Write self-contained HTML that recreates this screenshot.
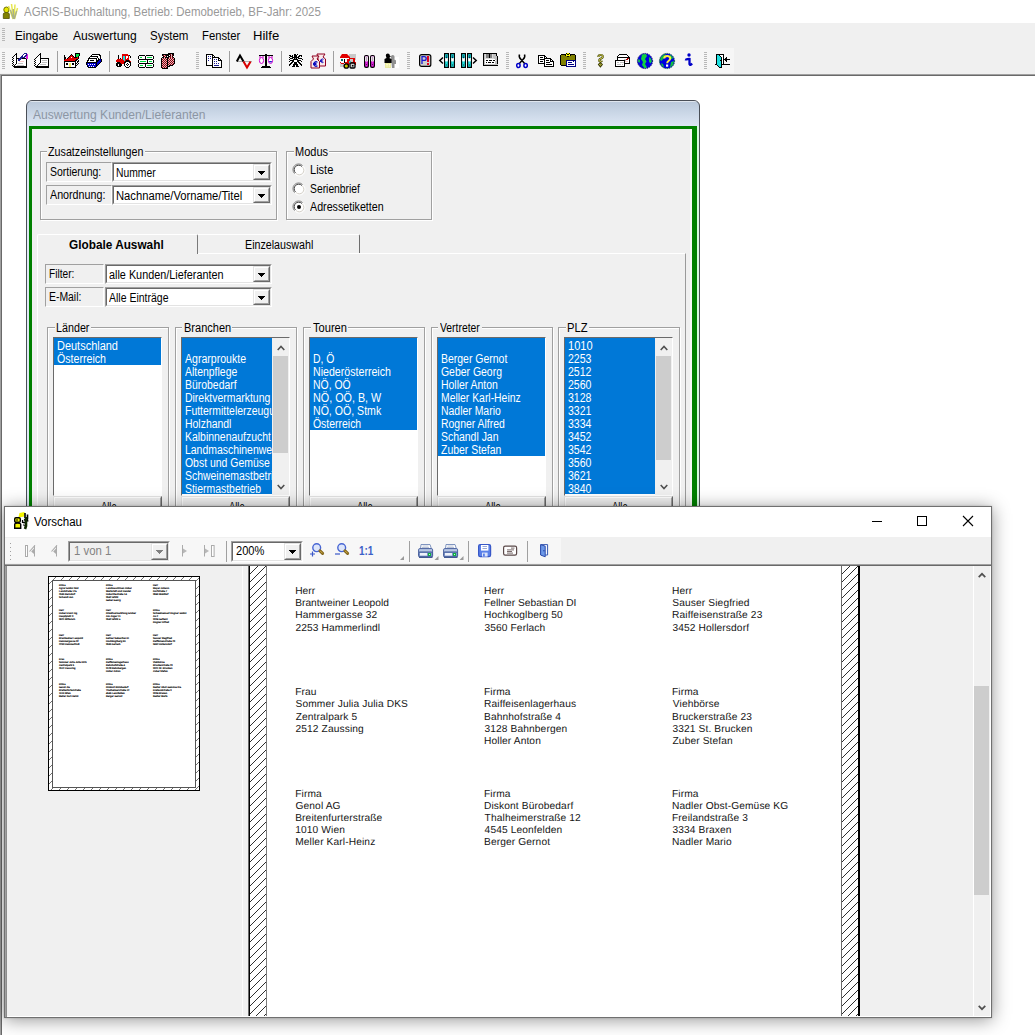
<!DOCTYPE html>
<html><head><meta charset="utf-8"><title>AGRIS</title><style>
*{box-sizing:border-box;margin:0;padding:0}
html,body{width:1035px;height:1035px;overflow:hidden;background:#fff}
body{position:relative;font-family:"Liberation Sans",sans-serif;font-size:12px;color:#000}
.a{position:absolute}
.t{position:absolute;white-space:pre;transform-origin:0 0;display:block}
svg{position:absolute;overflow:visible}
.gb{position:absolute;border:1px solid #a0a0a0;box-shadow:1px 1px 0 #fff, inset 1px 1px 0 #fff}
.lbl{position:absolute;background:#f0f0f0;border:1px solid;border-color:#a0a0a0 #fff #fff #a0a0a0}
.sunk{position:absolute;background:#fff;border:1px solid;border-color:#a0a0a0 #fff #fff #a0a0a0}
.sunk:before{content:"";position:absolute;left:0;top:0;right:0;bottom:0;border:1px solid;border-color:#696969 #e3e3e3 #e3e3e3 #696969}
.btn{position:absolute;background:#f0f0f0;border:1px solid;border-color:#e3e3e3 #696969 #696969 #e3e3e3}
.btn:before{content:"";position:absolute;left:0;top:0;right:0;bottom:0;border:1px solid;border-color:#fff #a0a0a0 #a0a0a0 #fff}
.sel{position:absolute;background:#0078d7}
.grip{position:absolute;width:3px;background:repeating-linear-gradient(to bottom,#b8b8b8 0,#b8b8b8 1px,transparent 1px,transparent 2px)}
.sep{position:absolute;width:1px;background:#a0a0a0}
</style></head><body>
<div class="a" style="left:0px;top:0px;width:1035px;height:23px;background:#fff"></div>
<div class="a" style="left:0px;top:23px;width:1035px;height:51px;background:#f0f0f0"></div>
<div class="a" style="left:0px;top:48px;width:734px;height:25px;background:#f6f6f6"></div>
<div class="a" style="left:0px;top:74px;width:1035px;height:1px;background:#a0a0a0"></div>
<div class="a" style="left:0px;top:75px;width:1035px;height:1px;background:#696969"></div>
<div class="a" style="left:0px;top:74px;width:1px;height:961px;background:#a0a0a0"></div>
<div class="a" style="left:1px;top:75px;width:1px;height:960px;background:#696969"></div>
<span class="t" style="left:23.90px;top:6.00px;font-size:12px;line-height:12px;color:#999;transform:scaleX(0.9551);">AGRIS-Buchhaltung, Betrieb: Demobetrieb, BF-Jahr: 2025</span>
<span class="t" style="left:15.47px;top:30.00px;font-size:12px;line-height:12px;color:#000;transform:scaleX(0.9777);">Eingabe</span>
<span class="t" style="left:72.60px;top:30.00px;font-size:12px;line-height:12px;color:#000;transform:scaleX(1.0064);">Auswertung</span>
<span class="t" style="left:149.92px;top:30.00px;font-size:12px;line-height:12px;color:#000;transform:scaleX(0.9600);">System</span>
<span class="t" style="left:201.51px;top:30.00px;font-size:12px;line-height:12px;color:#000;transform:scaleX(0.9406);">Fenster</span>
<span class="t" style="left:253.36px;top:30.00px;font-size:12px;line-height:12px;color:#000;transform:scaleX(1.0909);">Hilfe</span>
<div class="grip" style="left:2px;top:52px;height:18px"></div>
<div class="grip" style="left:196px;top:52px;height:18px"></div>
<div class="grip" style="left:407px;top:52px;height:18px"></div>
<div class="grip" style="left:506px;top:52px;height:18px"></div>
<div class="grip" style="left:583px;top:52px;height:18px"></div>
<div class="grip" style="left:704px;top:52px;height:18px"></div>
<div class="grip" style="left:2px;top:28px;width:3px;height:14px;"></div>
<div class="sep" style="left:57px;top:51px;height:21px"></div>
<div class="sep" style="left:109px;top:51px;height:21px"></div>
<div class="sep" style="left:229px;top:51px;height:21px"></div>
<div class="sep" style="left:281px;top:51px;height:21px"></div>
<div class="sep" style="left:333px;top:51px;height:21px"></div>
<svg style="left:0;top:0" width="760" height="80"><g transform="translate(12,53)" shape-rendering="crispEdges"><rect x="4" y="0" width="1" height="1" fill="#000"/><rect x="12" y="0" width="3" height="1" fill="#1c1c90"/><rect x="3" y="1" width="2" height="1" fill="#000"/><rect x="11" y="1" width="1" height="1" fill="#1c1c90"/><rect x="12" y="1" width="2" height="1" fill="#fff"/><rect x="14" y="1" width="1" height="1" fill="#1c1c90"/><rect x="15" y="1" width="1" height="1" fill="#e020e0"/><rect x="2" y="2" width="1" height="1" fill="#000"/><rect x="3" y="2" width="1" height="1" fill="#fff"/><rect x="4" y="2" width="1" height="1" fill="#000"/><rect x="10" y="2" width="1" height="1" fill="#1c1c90"/><rect x="11" y="2" width="2" height="1" fill="#fff"/><rect x="13" y="2" width="2" height="1" fill="#1c1c90"/><rect x="15" y="2" width="1" height="1" fill="#e020e0"/><rect x="1" y="3" width="1" height="1" fill="#000"/><rect x="3" y="3" width="1" height="1" fill="#fff"/><rect x="4" y="3" width="1" height="1" fill="#000"/><rect x="9" y="3" width="2" height="1" fill="#1c1c90"/><rect x="11" y="3" width="1" height="1" fill="#fff"/><rect x="12" y="3" width="2" height="1" fill="#1c1c90"/><rect x="14" y="3" width="2" height="1" fill="#e020e0"/><rect x="0" y="4" width="1" height="1" fill="#000"/><rect x="2" y="4" width="2" height="1" fill="#fff"/><rect x="4" y="4" width="1" height="1" fill="#000"/><rect x="8" y="4" width="5" height="1" fill="#1c1c90"/><rect x="14" y="4" width="2" height="1" fill="#e020e0"/><rect x="1" y="5" width="1" height="1" fill="#000"/><rect x="2" y="5" width="2" height="1" fill="#fff"/><rect x="4" y="5" width="3" height="1" fill="#000"/><rect x="7" y="5" width="3" height="1" fill="#1c1c90"/><rect x="10" y="5" width="4" height="1" fill="#000"/><rect x="14" y="5" width="2" height="1" fill="#e020e0"/><rect x="0" y="6" width="1" height="1" fill="#000"/><rect x="2" y="6" width="2" height="1" fill="#fff"/><rect x="4" y="6" width="1" height="1" fill="#000"/><rect x="5" y="6" width="1" height="1" fill="#fff"/><rect x="6" y="6" width="3" height="1" fill="#1c1c90"/><rect x="9" y="6" width="5" height="1" fill="#fff"/><rect x="14" y="6" width="1" height="1" fill="#000"/><rect x="1" y="7" width="1" height="1" fill="#000"/><rect x="2" y="7" width="2" height="1" fill="#fff"/><rect x="4" y="7" width="1" height="1" fill="#000"/><rect x="5" y="7" width="1" height="1" fill="#fff"/><rect x="6" y="7" width="2" height="1" fill="#1c1c90"/><rect x="8" y="7" width="6" height="1" fill="#fff"/><rect x="14" y="7" width="1" height="1" fill="#000"/><rect x="0" y="8" width="1" height="1" fill="#000"/><rect x="2" y="8" width="2" height="1" fill="#fff"/><rect x="4" y="8" width="1" height="1" fill="#000"/><rect x="5" y="8" width="2" height="1" fill="#fff"/><rect x="7" y="8" width="5" height="1" fill="#f6c8c8"/><rect x="12" y="8" width="2" height="1" fill="#fff"/><rect x="14" y="8" width="1" height="1" fill="#000"/><rect x="1" y="9" width="1" height="1" fill="#000"/><rect x="2" y="9" width="2" height="1" fill="#fff"/><rect x="4" y="9" width="1" height="1" fill="#000"/><rect x="5" y="9" width="9" height="1" fill="#fff"/><rect x="14" y="9" width="1" height="1" fill="#000"/><rect x="0" y="10" width="1" height="1" fill="#000"/><rect x="2" y="10" width="2" height="1" fill="#fff"/><rect x="4" y="10" width="1" height="1" fill="#000"/><rect x="5" y="10" width="1" height="1" fill="#fff"/><rect x="6" y="10" width="5" height="1" fill="#c0c0c0"/><rect x="11" y="10" width="3" height="1" fill="#fff"/><rect x="14" y="10" width="1" height="1" fill="#000"/><rect x="1" y="11" width="1" height="1" fill="#000"/><rect x="2" y="11" width="1" height="1" fill="#fff"/><rect x="3" y="11" width="1" height="1" fill="#000"/><rect x="4" y="11" width="10" height="1" fill="#fff"/><rect x="14" y="11" width="1" height="1" fill="#000"/><rect x="0" y="12" width="1" height="1" fill="#000"/><rect x="2" y="12" width="1" height="1" fill="#000"/><rect x="3" y="12" width="2" height="1" fill="#fff"/><rect x="5" y="12" width="7" height="1" fill="#c0c0c0"/><rect x="12" y="12" width="2" height="1" fill="#fff"/><rect x="14" y="12" width="1" height="1" fill="#000"/><rect x="1" y="13" width="14" height="1" fill="#000"/><rect x="2" y="14" width="13" height="1" fill="#000"/></g><g transform="translate(34,53)" shape-rendering="crispEdges"><rect x="6" y="0" width="1" height="1" fill="#000"/><rect x="5" y="1" width="2" height="1" fill="#000"/><rect x="4" y="2" width="1" height="1" fill="#000"/><rect x="5" y="2" width="1" height="1" fill="#fff"/><rect x="6" y="2" width="1" height="1" fill="#000"/><rect x="3" y="3" width="1" height="1" fill="#000"/><rect x="4" y="3" width="2" height="1" fill="#fff"/><rect x="6" y="3" width="1" height="1" fill="#000"/><rect x="2" y="4" width="1" height="1" fill="#000"/><rect x="3" y="4" width="3" height="1" fill="#fff"/><rect x="6" y="4" width="1" height="1" fill="#000"/><rect x="1" y="5" width="1" height="1" fill="#000"/><rect x="3" y="5" width="3" height="1" fill="#fff"/><rect x="6" y="5" width="9" height="1" fill="#000"/><rect x="0" y="6" width="1" height="1" fill="#000"/><rect x="2" y="6" width="4" height="1" fill="#fff"/><rect x="6" y="6" width="1" height="1" fill="#000"/><rect x="7" y="6" width="7" height="1" fill="#fff"/><rect x="14" y="6" width="1" height="1" fill="#000"/><rect x="1" y="7" width="1" height="1" fill="#000"/><rect x="2" y="7" width="4" height="1" fill="#fff"/><rect x="6" y="7" width="1" height="1" fill="#000"/><rect x="7" y="7" width="1" height="1" fill="#fff"/><rect x="8" y="7" width="5" height="1" fill="#c0c0c0"/><rect x="13" y="7" width="1" height="1" fill="#fff"/><rect x="14" y="7" width="1" height="1" fill="#000"/><rect x="0" y="8" width="1" height="1" fill="#000"/><rect x="2" y="8" width="4" height="1" fill="#fff"/><rect x="6" y="8" width="1" height="1" fill="#000"/><rect x="7" y="8" width="7" height="1" fill="#fff"/><rect x="14" y="8" width="1" height="1" fill="#000"/><rect x="1" y="9" width="1" height="1" fill="#000"/><rect x="2" y="9" width="4" height="1" fill="#fff"/><rect x="6" y="9" width="1" height="1" fill="#000"/><rect x="7" y="9" width="1" height="1" fill="#fff"/><rect x="8" y="9" width="5" height="1" fill="#c0c0c0"/><rect x="13" y="9" width="1" height="1" fill="#fff"/><rect x="14" y="9" width="1" height="1" fill="#000"/><rect x="0" y="10" width="1" height="1" fill="#000"/><rect x="2" y="10" width="3" height="1" fill="#fff"/><rect x="5" y="10" width="1" height="1" fill="#000"/><rect x="6" y="10" width="8" height="1" fill="#fff"/><rect x="14" y="10" width="1" height="1" fill="#000"/><rect x="1" y="11" width="1" height="1" fill="#000"/><rect x="2" y="11" width="2" height="1" fill="#fff"/><rect x="4" y="11" width="1" height="1" fill="#000"/><rect x="5" y="11" width="1" height="1" fill="#fff"/><rect x="6" y="11" width="6" height="1" fill="#c0c0c0"/><rect x="12" y="11" width="2" height="1" fill="#fff"/><rect x="14" y="11" width="1" height="1" fill="#000"/><rect x="0" y="12" width="1" height="1" fill="#000"/><rect x="2" y="12" width="1" height="1" fill="#fff"/><rect x="3" y="12" width="1" height="1" fill="#000"/><rect x="4" y="12" width="10" height="1" fill="#fff"/><rect x="14" y="12" width="1" height="1" fill="#000"/><rect x="1" y="13" width="14" height="1" fill="#000"/><rect x="2" y="14" width="13" height="1" fill="#000"/></g><g transform="translate(64,53)" shape-rendering="crispEdges"><rect x="11" y="0" width="5" height="1" fill="#000"/><rect x="7" y="1" width="1" height="1" fill="#000"/><rect x="11" y="1" width="1" height="1" fill="#000"/><rect x="12" y="1" width="3" height="1" fill="#00e040"/><rect x="15" y="1" width="1" height="1" fill="#000"/><rect x="0" y="2" width="1" height="1" fill="#000"/><rect x="6" y="2" width="1" height="1" fill="#000"/><rect x="7" y="2" width="1" height="1" fill="#e00000"/><rect x="8" y="2" width="1" height="1" fill="#000"/><rect x="11" y="2" width="1" height="1" fill="#000"/><rect x="12" y="2" width="3" height="1" fill="#00e040"/><rect x="15" y="2" width="1" height="1" fill="#000"/><rect x="0" y="3" width="1" height="1" fill="#000"/><rect x="5" y="3" width="1" height="1" fill="#000"/><rect x="6" y="3" width="3" height="1" fill="#e00000"/><rect x="9" y="3" width="1" height="1" fill="#000"/><rect x="11" y="3" width="1" height="1" fill="#000"/><rect x="12" y="3" width="2" height="1" fill="#00e040"/><rect x="14" y="3" width="1" height="1" fill="#000"/><rect x="0" y="4" width="2" height="1" fill="#000"/><rect x="4" y="4" width="1" height="1" fill="#000"/><rect x="5" y="4" width="2" height="1" fill="#e00000"/><rect x="7" y="4" width="1" height="1" fill="#fff"/><rect x="8" y="4" width="2" height="1" fill="#e00000"/><rect x="10" y="4" width="3" height="1" fill="#000"/><rect x="13" y="4" width="1" height="1" fill="#e00000"/><rect x="14" y="4" width="1" height="1" fill="#000"/><rect x="0" y="5" width="2" height="1" fill="#000"/><rect x="3" y="5" width="1" height="1" fill="#000"/><rect x="4" y="5" width="10" height="1" fill="#e00000"/><rect x="14" y="5" width="1" height="1" fill="#000"/><rect x="0" y="6" width="1" height="1" fill="#000"/><rect x="1" y="6" width="11" height="1" fill="#e00000"/><rect x="12" y="6" width="2" height="1" fill="#000"/><rect x="0" y="7" width="11" height="1" fill="#e00000"/><rect x="11" y="7" width="2" height="1" fill="#000"/><rect x="13" y="7" width="1" height="1" fill="#fff"/><rect x="14" y="7" width="1" height="1" fill="#000"/><rect x="0" y="8" width="12" height="1" fill="#000"/><rect x="12" y="8" width="1" height="1" fill="#fff"/><rect x="13" y="8" width="2" height="1" fill="#000"/><rect x="0" y="9" width="1" height="1" fill="#000"/><rect x="1" y="9" width="10" height="1" fill="#fff"/><rect x="11" y="9" width="1" height="1" fill="#000"/><rect x="12" y="9" width="1" height="1" fill="#fff"/><rect x="13" y="9" width="1" height="1" fill="#000"/><rect x="0" y="10" width="1" height="1" fill="#000"/><rect x="1" y="10" width="1" height="1" fill="#fff"/><rect x="2" y="10" width="2" height="1" fill="#000"/><rect x="4" y="10" width="1" height="1" fill="#fff"/><rect x="5" y="10" width="2" height="1" fill="#f0f060"/><rect x="7" y="10" width="1" height="1" fill="#fff"/><rect x="8" y="10" width="2" height="1" fill="#000"/><rect x="10" y="10" width="1" height="1" fill="#fff"/><rect x="11" y="10" width="2" height="1" fill="#000"/><rect x="13" y="10" width="1" height="1" fill="#fff"/><rect x="14" y="10" width="1" height="1" fill="#000"/><rect x="0" y="11" width="1" height="1" fill="#000"/><rect x="1" y="11" width="1" height="1" fill="#fff"/><rect x="2" y="11" width="2" height="1" fill="#000"/><rect x="4" y="11" width="1" height="1" fill="#fff"/><rect x="5" y="11" width="2" height="1" fill="#f0f060"/><rect x="7" y="11" width="1" height="1" fill="#fff"/><rect x="8" y="11" width="2" height="1" fill="#000"/><rect x="10" y="11" width="1" height="1" fill="#fff"/><rect x="11" y="11" width="1" height="1" fill="#000"/><rect x="12" y="11" width="1" height="1" fill="#fff"/><rect x="13" y="11" width="1" height="1" fill="#000"/><rect x="0" y="12" width="1" height="1" fill="#000"/><rect x="1" y="12" width="4" height="1" fill="#fff"/><rect x="5" y="12" width="2" height="1" fill="#f0f060"/><rect x="7" y="12" width="4" height="1" fill="#fff"/><rect x="11" y="12" width="2" height="1" fill="#000"/><rect x="0" y="13" width="1" height="1" fill="#000"/><rect x="1" y="13" width="4" height="1" fill="#fff"/><rect x="5" y="13" width="2" height="1" fill="#f0f060"/><rect x="7" y="13" width="4" height="1" fill="#fff"/><rect x="11" y="13" width="1" height="1" fill="#000"/><rect x="0" y="14" width="12" height="1" fill="#000"/></g><g transform="translate(86,54)" shape-rendering="crispEdges"><rect x="6" y="0" width="8" height="1" fill="#000"/><rect x="5" y="1" width="1" height="1" fill="#000"/><rect x="6" y="1" width="7" height="1" fill="#fff"/><rect x="13" y="1" width="2" height="1" fill="#000"/><rect x="4" y="2" width="8" height="1" fill="#000"/><rect x="12" y="2" width="2" height="1" fill="#fff"/><rect x="14" y="2" width="1" height="1" fill="#000"/><rect x="3" y="3" width="1" height="1" fill="#000"/><rect x="4" y="3" width="7" height="1" fill="#fff"/><rect x="11" y="3" width="1" height="1" fill="#000"/><rect x="12" y="3" width="2" height="1" fill="#fff"/><rect x="14" y="3" width="1" height="1" fill="#000"/><rect x="2" y="4" width="9" height="1" fill="#000"/><rect x="11" y="4" width="1" height="1" fill="#fff"/><rect x="12" y="4" width="1" height="1" fill="#000"/><rect x="13" y="4" width="1" height="1" fill="#fff"/><rect x="14" y="4" width="1" height="1" fill="#000"/><rect x="2" y="5" width="1" height="1" fill="#000"/><rect x="3" y="5" width="7" height="1" fill="#fff"/><rect x="10" y="5" width="1" height="1" fill="#000"/><rect x="11" y="5" width="1" height="1" fill="#fff"/><rect x="12" y="5" width="2" height="1" fill="#000"/><rect x="14" y="5" width="1" height="1" fill="#0000c8"/><rect x="15" y="5" width="1" height="1" fill="#000"/><rect x="1" y="6" width="2" height="1" fill="#000"/><rect x="3" y="6" width="1" height="1" fill="#fff"/><rect x="4" y="6" width="4" height="1" fill="#000"/><rect x="8" y="6" width="2" height="1" fill="#fff"/><rect x="10" y="6" width="3" height="1" fill="#000"/><rect x="13" y="6" width="2" height="1" fill="#0000c8"/><rect x="15" y="6" width="1" height="1" fill="#000"/><rect x="1" y="7" width="1" height="1" fill="#000"/><rect x="2" y="7" width="8" height="1" fill="#fff"/><rect x="10" y="7" width="2" height="1" fill="#000"/><rect x="12" y="7" width="3" height="1" fill="#0000c8"/><rect x="15" y="7" width="1" height="1" fill="#000"/><rect x="0" y="8" width="11" height="1" fill="#000"/><rect x="11" y="8" width="3" height="1" fill="#0000c8"/><rect x="14" y="8" width="1" height="1" fill="#000"/><rect x="0" y="9" width="1" height="1" fill="#000"/><rect x="1" y="9" width="9" height="1" fill="#0000c8"/><rect x="10" y="9" width="1" height="1" fill="#000"/><rect x="11" y="9" width="2" height="1" fill="#0000c8"/><rect x="13" y="9" width="1" height="1" fill="#000"/><rect x="0" y="10" width="1" height="1" fill="#000"/><rect x="1" y="10" width="1" height="1" fill="#0000c8"/><rect x="2" y="10" width="1" height="1" fill="#fff"/><rect x="3" y="10" width="1" height="1" fill="#0000c8"/><rect x="4" y="10" width="1" height="1" fill="#fff"/><rect x="5" y="10" width="1" height="1" fill="#0000c8"/><rect x="6" y="10" width="1" height="1" fill="#fff"/><rect x="7" y="10" width="1" height="1" fill="#0000c8"/><rect x="8" y="10" width="1" height="1" fill="#fff"/><rect x="9" y="10" width="1" height="1" fill="#0000c8"/><rect x="10" y="10" width="1" height="1" fill="#000"/><rect x="11" y="10" width="1" height="1" fill="#0000c8"/><rect x="12" y="10" width="1" height="1" fill="#000"/><rect x="1" y="11" width="1" height="1" fill="#000"/><rect x="2" y="11" width="8" height="1" fill="#0000c8"/><rect x="10" y="11" width="2" height="1" fill="#000"/><rect x="1" y="12" width="1" height="1" fill="#000"/><rect x="2" y="12" width="1" height="1" fill="#0000c8"/><rect x="3" y="12" width="1" height="1" fill="#fff"/><rect x="4" y="12" width="1" height="1" fill="#0000c8"/><rect x="5" y="12" width="1" height="1" fill="#fff"/><rect x="6" y="12" width="1" height="1" fill="#0000c8"/><rect x="7" y="12" width="1" height="1" fill="#fff"/><rect x="8" y="12" width="2" height="1" fill="#0000c8"/><rect x="10" y="12" width="1" height="1" fill="#000"/><rect x="2" y="13" width="8" height="1" fill="#000"/></g><g transform="translate(116,54)" shape-rendering="crispEdges"><rect x="6" y="0" width="6" height="1" fill="#e00000"/><rect x="2" y="1" width="1" height="1" fill="#000"/><rect x="6" y="1" width="7" height="1" fill="#e00000"/><rect x="13" y="1" width="1" height="1" fill="#000"/><rect x="2" y="2" width="1" height="1" fill="#000"/><rect x="6" y="2" width="1" height="1" fill="#e00000"/><rect x="7" y="2" width="2" height="1" fill="#20e0e0"/><rect x="9" y="2" width="1" height="1" fill="#e00000"/><rect x="10" y="2" width="2" height="1" fill="#fff"/><rect x="12" y="2" width="1" height="1" fill="#e00000"/><rect x="14" y="2" width="1" height="1" fill="#000"/><rect x="2" y="3" width="1" height="1" fill="#000"/><rect x="6" y="3" width="1" height="1" fill="#e00000"/><rect x="7" y="3" width="2" height="1" fill="#20e0e0"/><rect x="9" y="3" width="1" height="1" fill="#e00000"/><rect x="10" y="3" width="2" height="1" fill="#fff"/><rect x="12" y="3" width="1" height="1" fill="#e00000"/><rect x="14" y="3" width="1" height="1" fill="#000"/><rect x="2" y="4" width="1" height="1" fill="#000"/><rect x="4" y="4" width="1" height="1" fill="#000"/><rect x="6" y="4" width="1" height="1" fill="#e00000"/><rect x="7" y="4" width="2" height="1" fill="#20e0e0"/><rect x="9" y="4" width="1" height="1" fill="#e00000"/><rect x="10" y="4" width="1" height="1" fill="#fff"/><rect x="11" y="4" width="2" height="1" fill="#e00000"/><rect x="1" y="5" width="6" height="1" fill="#e00000"/><rect x="7" y="5" width="2" height="1" fill="#20e0e0"/><rect x="9" y="5" width="4" height="1" fill="#e00000"/><rect x="0" y="6" width="8" height="1" fill="#e00000"/><rect x="8" y="6" width="1" height="1" fill="#20e0e0"/><rect x="9" y="6" width="1" height="1" fill="#e00000"/><rect x="10" y="6" width="3" height="1" fill="#000"/><rect x="13" y="6" width="1" height="1" fill="#e00000"/><rect x="0" y="7" width="9" height="1" fill="#e00000"/><rect x="9" y="7" width="5" height="1" fill="#000"/><rect x="14" y="7" width="1" height="1" fill="#e00000"/><rect x="1" y="8" width="3" height="1" fill="#000"/><rect x="4" y="8" width="4" height="1" fill="#e00000"/><rect x="8" y="8" width="2" height="1" fill="#000"/><rect x="10" y="8" width="3" height="1" fill="#fff"/><rect x="13" y="8" width="2" height="1" fill="#000"/><rect x="0" y="9" width="5" height="1" fill="#000"/><rect x="5" y="9" width="3" height="1" fill="#e00000"/><rect x="8" y="9" width="1" height="1" fill="#000"/><rect x="9" y="9" width="2" height="1" fill="#fff"/><rect x="11" y="9" width="1" height="1" fill="#000"/><rect x="12" y="9" width="2" height="1" fill="#fff"/><rect x="14" y="9" width="1" height="1" fill="#000"/><rect x="0" y="10" width="2" height="1" fill="#000"/><rect x="2" y="10" width="1" height="1" fill="#fff"/><rect x="3" y="10" width="3" height="1" fill="#000"/><rect x="8" y="10" width="1" height="1" fill="#000"/><rect x="9" y="10" width="1" height="1" fill="#fff"/><rect x="10" y="10" width="1" height="1" fill="#000"/><rect x="11" y="10" width="1" height="1" fill="#fff"/><rect x="12" y="10" width="1" height="1" fill="#000"/><rect x="13" y="10" width="1" height="1" fill="#fff"/><rect x="14" y="10" width="1" height="1" fill="#000"/><rect x="0" y="11" width="2" height="1" fill="#000"/><rect x="2" y="11" width="1" height="1" fill="#fff"/><rect x="3" y="11" width="3" height="1" fill="#000"/><rect x="8" y="11" width="1" height="1" fill="#000"/><rect x="9" y="11" width="2" height="1" fill="#fff"/><rect x="11" y="11" width="1" height="1" fill="#000"/><rect x="12" y="11" width="2" height="1" fill="#fff"/><rect x="14" y="11" width="1" height="1" fill="#000"/><rect x="1" y="12" width="4" height="1" fill="#000"/><rect x="9" y="12" width="1" height="1" fill="#000"/><rect x="10" y="12" width="3" height="1" fill="#fff"/><rect x="13" y="12" width="1" height="1" fill="#000"/><rect x="10" y="13" width="3" height="1" fill="#000"/></g><g transform="translate(138,55)" shape-rendering="crispEdges"><rect x="1" y="0" width="6" height="1" fill="#000"/><rect x="8" y="0" width="7" height="1" fill="#000"/><rect x="0" y="1" width="1" height="1" fill="#000"/><rect x="1" y="1" width="6" height="1" fill="#fff"/><rect x="7" y="1" width="1" height="1" fill="#000"/><rect x="8" y="1" width="7" height="1" fill="#fff"/><rect x="15" y="1" width="1" height="1" fill="#000"/><rect x="0" y="2" width="1" height="1" fill="#000"/><rect x="1" y="2" width="1" height="1" fill="#fff"/><rect x="2" y="2" width="2" height="1" fill="#00e040"/><rect x="4" y="2" width="3" height="1" fill="#fff"/><rect x="7" y="2" width="1" height="1" fill="#000"/><rect x="8" y="2" width="1" height="1" fill="#fff"/><rect x="9" y="2" width="5" height="1" fill="#00e040"/><rect x="14" y="2" width="1" height="1" fill="#fff"/><rect x="15" y="2" width="1" height="1" fill="#000"/><rect x="0" y="3" width="1" height="1" fill="#000"/><rect x="1" y="3" width="6" height="1" fill="#fff"/><rect x="7" y="3" width="1" height="1" fill="#000"/><rect x="8" y="3" width="7" height="1" fill="#fff"/><rect x="15" y="3" width="1" height="1" fill="#000"/><rect x="1" y="4" width="14" height="1" fill="#000"/><rect x="0" y="5" width="1" height="1" fill="#000"/><rect x="1" y="5" width="8" height="1" fill="#fff"/><rect x="9" y="5" width="1" height="1" fill="#000"/><rect x="10" y="5" width="5" height="1" fill="#fff"/><rect x="15" y="5" width="1" height="1" fill="#000"/><rect x="0" y="6" width="1" height="1" fill="#000"/><rect x="1" y="6" width="1" height="1" fill="#fff"/><rect x="2" y="6" width="6" height="1" fill="#00e040"/><rect x="8" y="6" width="1" height="1" fill="#fff"/><rect x="9" y="6" width="1" height="1" fill="#000"/><rect x="10" y="6" width="1" height="1" fill="#fff"/><rect x="11" y="6" width="3" height="1" fill="#00e040"/><rect x="14" y="6" width="1" height="1" fill="#fff"/><rect x="15" y="6" width="1" height="1" fill="#000"/><rect x="0" y="7" width="1" height="1" fill="#000"/><rect x="1" y="7" width="8" height="1" fill="#fff"/><rect x="9" y="7" width="1" height="1" fill="#000"/><rect x="10" y="7" width="5" height="1" fill="#fff"/><rect x="15" y="7" width="1" height="1" fill="#000"/><rect x="1" y="8" width="14" height="1" fill="#000"/><rect x="0" y="9" width="1" height="1" fill="#000"/><rect x="1" y="9" width="6" height="1" fill="#fff"/><rect x="7" y="9" width="1" height="1" fill="#000"/><rect x="8" y="9" width="7" height="1" fill="#fff"/><rect x="15" y="9" width="1" height="1" fill="#000"/><rect x="0" y="10" width="1" height="1" fill="#000"/><rect x="1" y="10" width="1" height="1" fill="#fff"/><rect x="2" y="10" width="3" height="1" fill="#00e040"/><rect x="5" y="10" width="2" height="1" fill="#fff"/><rect x="7" y="10" width="1" height="1" fill="#000"/><rect x="8" y="10" width="1" height="1" fill="#fff"/><rect x="9" y="10" width="5" height="1" fill="#00e040"/><rect x="14" y="10" width="1" height="1" fill="#fff"/><rect x="15" y="10" width="1" height="1" fill="#000"/><rect x="0" y="11" width="1" height="1" fill="#000"/><rect x="1" y="11" width="6" height="1" fill="#fff"/><rect x="7" y="11" width="1" height="1" fill="#000"/><rect x="8" y="11" width="7" height="1" fill="#fff"/><rect x="15" y="11" width="1" height="1" fill="#000"/><rect x="1" y="12" width="6" height="1" fill="#000"/><rect x="8" y="12" width="7" height="1" fill="#000"/></g><g transform="translate(160,53)" shape-rendering="crispEdges"><rect x="8" y="0" width="6" height="1" fill="#000"/><rect x="2" y="1" width="8" height="1" fill="#000"/><rect x="10" y="1" width="1" height="1" fill="#8c0010"/><rect x="11" y="1" width="1" height="1" fill="#e8b8b8"/><rect x="12" y="1" width="2" height="1" fill="#000"/><rect x="2" y="2" width="1" height="1" fill="#000"/><rect x="3" y="2" width="1" height="1" fill="#8c0010"/><rect x="4" y="2" width="1" height="1" fill="#e8b8b8"/><rect x="5" y="2" width="1" height="1" fill="#8c0010"/><rect x="6" y="2" width="3" height="1" fill="#000"/><rect x="9" y="2" width="1" height="1" fill="#fff"/><rect x="10" y="2" width="1" height="1" fill="#000"/><rect x="11" y="2" width="1" height="1" fill="#e8b8b8"/><rect x="12" y="2" width="1" height="1" fill="#8c0010"/><rect x="13" y="2" width="1" height="1" fill="#000"/><rect x="3" y="3" width="1" height="1" fill="#000"/><rect x="4" y="3" width="1" height="1" fill="#8c0010"/><rect x="5" y="3" width="1" height="1" fill="#e8b8b8"/><rect x="6" y="3" width="1" height="1" fill="#000"/><rect x="7" y="3" width="1" height="1" fill="#fff"/><rect x="8" y="3" width="2" height="1" fill="#000"/><rect x="10" y="3" width="1" height="1" fill="#8c0010"/><rect x="11" y="3" width="1" height="1" fill="#e8b8b8"/><rect x="12" y="3" width="1" height="1" fill="#000"/><rect x="2" y="4" width="2" height="1" fill="#000"/><rect x="4" y="4" width="1" height="1" fill="#e8b8b8"/><rect x="5" y="4" width="4" height="1" fill="#000"/><rect x="9" y="4" width="1" height="1" fill="#e8b8b8"/><rect x="10" y="4" width="1" height="1" fill="#8c0010"/><rect x="11" y="4" width="1" height="1" fill="#e8b8b8"/><rect x="12" y="4" width="1" height="1" fill="#8c0010"/><rect x="13" y="4" width="1" height="1" fill="#000"/><rect x="1" y="5" width="1" height="1" fill="#000"/><rect x="2" y="5" width="1" height="1" fill="#e8b8b8"/><rect x="3" y="5" width="1" height="1" fill="#8c0010"/><rect x="4" y="5" width="1" height="1" fill="#e8b8b8"/><rect x="5" y="5" width="1" height="1" fill="#8c0010"/><rect x="6" y="5" width="1" height="1" fill="#e8b8b8"/><rect x="7" y="5" width="1" height="1" fill="#000"/><rect x="8" y="5" width="1" height="1" fill="#8c0010"/><rect x="9" y="5" width="1" height="1" fill="#e8b8b8"/><rect x="10" y="5" width="1" height="1" fill="#8c0010"/><rect x="11" y="5" width="1" height="1" fill="#e8b8b8"/><rect x="12" y="5" width="1" height="1" fill="#8c0010"/><rect x="13" y="5" width="1" height="1" fill="#e8b8b8"/><rect x="14" y="5" width="1" height="1" fill="#000"/><rect x="1" y="6" width="1" height="1" fill="#000"/><rect x="2" y="6" width="1" height="1" fill="#8c0010"/><rect x="3" y="6" width="1" height="1" fill="#e8b8b8"/><rect x="4" y="6" width="1" height="1" fill="#8c0010"/><rect x="5" y="6" width="1" height="1" fill="#e8b8b8"/><rect x="6" y="6" width="1" height="1" fill="#8c0010"/><rect x="7" y="6" width="1" height="1" fill="#000"/><rect x="8" y="6" width="1" height="1" fill="#e8b8b8"/><rect x="9" y="6" width="1" height="1" fill="#8c0010"/><rect x="10" y="6" width="1" height="1" fill="#e8b8b8"/><rect x="11" y="6" width="1" height="1" fill="#8c0010"/><rect x="12" y="6" width="1" height="1" fill="#e8b8b8"/><rect x="13" y="6" width="1" height="1" fill="#8c0010"/><rect x="14" y="6" width="1" height="1" fill="#000"/><rect x="1" y="7" width="1" height="1" fill="#000"/><rect x="2" y="7" width="1" height="1" fill="#e8b8b8"/><rect x="3" y="7" width="1" height="1" fill="#8c0010"/><rect x="4" y="7" width="1" height="1" fill="#e8b8b8"/><rect x="5" y="7" width="1" height="1" fill="#8c0010"/><rect x="6" y="7" width="1" height="1" fill="#e8b8b8"/><rect x="7" y="7" width="1" height="1" fill="#000"/><rect x="8" y="7" width="1" height="1" fill="#8c0010"/><rect x="9" y="7" width="1" height="1" fill="#e8b8b8"/><rect x="10" y="7" width="1" height="1" fill="#8c0010"/><rect x="11" y="7" width="1" height="1" fill="#e8b8b8"/><rect x="12" y="7" width="1" height="1" fill="#8c0010"/><rect x="13" y="7" width="1" height="1" fill="#e8b8b8"/><rect x="14" y="7" width="1" height="1" fill="#000"/><rect x="1" y="8" width="1" height="1" fill="#000"/><rect x="2" y="8" width="1" height="1" fill="#8c0010"/><rect x="3" y="8" width="1" height="1" fill="#e8b8b8"/><rect x="4" y="8" width="1" height="1" fill="#8c0010"/><rect x="5" y="8" width="1" height="1" fill="#e8b8b8"/><rect x="6" y="8" width="1" height="1" fill="#8c0010"/><rect x="7" y="8" width="1" height="1" fill="#000"/><rect x="8" y="8" width="1" height="1" fill="#e8b8b8"/><rect x="9" y="8" width="1" height="1" fill="#8c0010"/><rect x="10" y="8" width="1" height="1" fill="#e8b8b8"/><rect x="11" y="8" width="1" height="1" fill="#8c0010"/><rect x="12" y="8" width="1" height="1" fill="#e8b8b8"/><rect x="13" y="8" width="1" height="1" fill="#8c0010"/><rect x="14" y="8" width="1" height="1" fill="#000"/><rect x="1" y="9" width="1" height="1" fill="#000"/><rect x="2" y="9" width="1" height="1" fill="#e8b8b8"/><rect x="3" y="9" width="1" height="1" fill="#8c0010"/><rect x="4" y="9" width="1" height="1" fill="#e8b8b8"/><rect x="5" y="9" width="1" height="1" fill="#8c0010"/><rect x="6" y="9" width="1" height="1" fill="#e8b8b8"/><rect x="7" y="9" width="1" height="1" fill="#000"/><rect x="8" y="9" width="1" height="1" fill="#8c0010"/><rect x="9" y="9" width="1" height="1" fill="#e8b8b8"/><rect x="10" y="9" width="1" height="1" fill="#8c0010"/><rect x="11" y="9" width="1" height="1" fill="#e8b8b8"/><rect x="12" y="9" width="1" height="1" fill="#8c0010"/><rect x="13" y="9" width="1" height="1" fill="#e8b8b8"/><rect x="14" y="9" width="1" height="1" fill="#000"/><rect x="1" y="10" width="1" height="1" fill="#000"/><rect x="2" y="10" width="1" height="1" fill="#8c0010"/><rect x="3" y="10" width="1" height="1" fill="#e8b8b8"/><rect x="4" y="10" width="1" height="1" fill="#8c0010"/><rect x="5" y="10" width="1" height="1" fill="#e8b8b8"/><rect x="6" y="10" width="1" height="1" fill="#8c0010"/><rect x="7" y="10" width="1" height="1" fill="#000"/><rect x="8" y="10" width="1" height="1" fill="#e8b8b8"/><rect x="9" y="10" width="1" height="1" fill="#8c0010"/><rect x="10" y="10" width="1" height="1" fill="#e8b8b8"/><rect x="11" y="10" width="1" height="1" fill="#8c0010"/><rect x="12" y="10" width="1" height="1" fill="#e8b8b8"/><rect x="13" y="10" width="1" height="1" fill="#8c0010"/><rect x="14" y="10" width="1" height="1" fill="#000"/><rect x="1" y="11" width="1" height="1" fill="#000"/><rect x="2" y="11" width="1" height="1" fill="#e8b8b8"/><rect x="3" y="11" width="1" height="1" fill="#8c0010"/><rect x="4" y="11" width="1" height="1" fill="#e8b8b8"/><rect x="5" y="11" width="1" height="1" fill="#8c0010"/><rect x="6" y="11" width="1" height="1" fill="#e8b8b8"/><rect x="7" y="11" width="1" height="1" fill="#000"/><rect x="8" y="11" width="1" height="1" fill="#8c0010"/><rect x="9" y="11" width="1" height="1" fill="#e8b8b8"/><rect x="10" y="11" width="1" height="1" fill="#8c0010"/><rect x="11" y="11" width="1" height="1" fill="#e8b8b8"/><rect x="12" y="11" width="1" height="1" fill="#8c0010"/><rect x="13" y="11" width="1" height="1" fill="#000"/><rect x="1" y="12" width="1" height="1" fill="#000"/><rect x="2" y="12" width="1" height="1" fill="#8c0010"/><rect x="3" y="12" width="1" height="1" fill="#e8b8b8"/><rect x="4" y="12" width="1" height="1" fill="#8c0010"/><rect x="5" y="12" width="1" height="1" fill="#e8b8b8"/><rect x="6" y="12" width="1" height="1" fill="#8c0010"/><rect x="7" y="12" width="1" height="1" fill="#000"/><rect x="8" y="12" width="1" height="1" fill="#e8b8b8"/><rect x="9" y="12" width="4" height="1" fill="#000"/><rect x="1" y="13" width="1" height="1" fill="#000"/><rect x="2" y="13" width="1" height="1" fill="#e8b8b8"/><rect x="3" y="13" width="1" height="1" fill="#8c0010"/><rect x="4" y="13" width="1" height="1" fill="#e8b8b8"/><rect x="5" y="13" width="1" height="1" fill="#8c0010"/><rect x="6" y="13" width="1" height="1" fill="#e8b8b8"/><rect x="7" y="13" width="3" height="1" fill="#000"/><rect x="1" y="14" width="1" height="1" fill="#000"/><rect x="2" y="14" width="1" height="1" fill="#8c0010"/><rect x="3" y="14" width="1" height="1" fill="#e8b8b8"/><rect x="4" y="14" width="1" height="1" fill="#8c0010"/><rect x="5" y="14" width="1" height="1" fill="#e8b8b8"/><rect x="6" y="14" width="1" height="1" fill="#8c0010"/><rect x="7" y="14" width="1" height="1" fill="#000"/><rect x="2" y="15" width="6" height="1" fill="#000"/></g><g transform="translate(206,54)" shape-rendering="crispEdges"><rect x="0" y="0" width="7" height="1" fill="#000"/><rect x="0" y="1" width="1" height="1" fill="#000"/><rect x="1" y="1" width="5" height="1" fill="#fff"/><rect x="6" y="1" width="2" height="1" fill="#000"/><rect x="0" y="2" width="1" height="1" fill="#000"/><rect x="1" y="2" width="1" height="1" fill="#fff"/><rect x="2" y="2" width="1" height="1" fill="#1c1c90"/><rect x="3" y="2" width="1" height="1" fill="#fff"/><rect x="4" y="2" width="1" height="1" fill="#1c1c90"/><rect x="5" y="2" width="1" height="1" fill="#fff"/><rect x="6" y="2" width="1" height="1" fill="#000"/><rect x="7" y="2" width="1" height="1" fill="#fff"/><rect x="8" y="2" width="1" height="1" fill="#000"/><rect x="0" y="3" width="1" height="1" fill="#000"/><rect x="1" y="3" width="5" height="1" fill="#fff"/><rect x="6" y="3" width="7" height="1" fill="#000"/><rect x="0" y="4" width="1" height="1" fill="#000"/><rect x="1" y="4" width="1" height="1" fill="#fff"/><rect x="2" y="4" width="1" height="1" fill="#1c1c90"/><rect x="3" y="4" width="1" height="1" fill="#fff"/><rect x="4" y="4" width="1" height="1" fill="#1c1c90"/><rect x="5" y="4" width="1" height="1" fill="#fff"/><rect x="6" y="4" width="1" height="1" fill="#000"/><rect x="7" y="4" width="5" height="1" fill="#fff"/><rect x="12" y="4" width="2" height="1" fill="#000"/><rect x="0" y="5" width="1" height="1" fill="#000"/><rect x="1" y="5" width="5" height="1" fill="#fff"/><rect x="6" y="5" width="1" height="1" fill="#000"/><rect x="7" y="5" width="1" height="1" fill="#fff"/><rect x="8" y="5" width="1" height="1" fill="#1c1c90"/><rect x="9" y="5" width="1" height="1" fill="#fff"/><rect x="10" y="5" width="1" height="1" fill="#1c1c90"/><rect x="11" y="5" width="1" height="1" fill="#fff"/><rect x="12" y="5" width="1" height="1" fill="#000"/><rect x="13" y="5" width="1" height="1" fill="#fff"/><rect x="14" y="5" width="1" height="1" fill="#000"/><rect x="0" y="6" width="1" height="1" fill="#000"/><rect x="1" y="6" width="1" height="1" fill="#fff"/><rect x="2" y="6" width="1" height="1" fill="#1c1c90"/><rect x="3" y="6" width="3" height="1" fill="#fff"/><rect x="6" y="6" width="1" height="1" fill="#000"/><rect x="7" y="6" width="5" height="1" fill="#fff"/><rect x="12" y="6" width="4" height="1" fill="#000"/><rect x="0" y="7" width="1" height="1" fill="#000"/><rect x="1" y="7" width="5" height="1" fill="#fff"/><rect x="6" y="7" width="1" height="1" fill="#000"/><rect x="7" y="7" width="1" height="1" fill="#fff"/><rect x="8" y="7" width="1" height="1" fill="#1c1c90"/><rect x="9" y="7" width="1" height="1" fill="#fff"/><rect x="10" y="7" width="1" height="1" fill="#1c1c90"/><rect x="11" y="7" width="4" height="1" fill="#fff"/><rect x="15" y="7" width="1" height="1" fill="#000"/><rect x="0" y="8" width="1" height="1" fill="#000"/><rect x="1" y="8" width="5" height="1" fill="#fff"/><rect x="6" y="8" width="1" height="1" fill="#000"/><rect x="7" y="8" width="8" height="1" fill="#fff"/><rect x="15" y="8" width="1" height="1" fill="#000"/><rect x="0" y="9" width="1" height="1" fill="#000"/><rect x="1" y="9" width="5" height="1" fill="#fff"/><rect x="6" y="9" width="1" height="1" fill="#000"/><rect x="7" y="9" width="1" height="1" fill="#fff"/><rect x="8" y="9" width="1" height="1" fill="#1c1c90"/><rect x="9" y="9" width="1" height="1" fill="#fff"/><rect x="10" y="9" width="1" height="1" fill="#1c1c90"/><rect x="11" y="9" width="1" height="1" fill="#fff"/><rect x="12" y="9" width="1" height="1" fill="#1c1c90"/><rect x="13" y="9" width="2" height="1" fill="#fff"/><rect x="15" y="9" width="1" height="1" fill="#000"/><rect x="0" y="10" width="1" height="1" fill="#000"/><rect x="1" y="10" width="5" height="1" fill="#fff"/><rect x="6" y="10" width="1" height="1" fill="#000"/><rect x="7" y="10" width="8" height="1" fill="#fff"/><rect x="15" y="10" width="1" height="1" fill="#000"/><rect x="0" y="11" width="7" height="1" fill="#000"/><rect x="7" y="11" width="1" height="1" fill="#fff"/><rect x="8" y="11" width="5" height="1" fill="#1c1c90"/><rect x="13" y="11" width="2" height="1" fill="#fff"/><rect x="15" y="11" width="1" height="1" fill="#000"/><rect x="6" y="12" width="1" height="1" fill="#000"/><rect x="7" y="12" width="8" height="1" fill="#fff"/><rect x="15" y="12" width="1" height="1" fill="#000"/><rect x="6" y="13" width="10" height="1" fill="#000"/></g><g transform="translate(236,54)"><rect x="1" y="7" width="15" height="1" fill="#b0b0b0"/><path d="M0.8 7.5L4 1.5 7.5 7.5" fill="none" stroke="#000" stroke-width="2"/><path d="M7.5 7.5L11 13.5 14.6 7.5" fill="none" stroke="#d80000" stroke-width="2"/></g><g transform="translate(258,54)"><rect x="7" y="0" width="2" height="12" fill="#000"/><rect x="1" y="1" width="14" height="1" fill="#000"/><rect x="4" y="12" width="8" height="1" fill="#000"/><rect x="3" y="13" width="10" height="1" fill="#000"/><path d="M2 2v2M5 2v2M11 2v2M14 2v2" fill="none" stroke="#c000c0" stroke-width="1"/><ellipse cx="3.5" cy="6.5" rx="2.1" ry="3" fill="#fff" stroke="#d000d0" stroke-width="1"/><ellipse cx="12.5" cy="6.5" rx="2.1" ry="3" fill="#fff" stroke="#d000d0" stroke-width="1"/><path d="M10.9 7a1.7 2.3 0 0 0 3.2 0z" fill="#2020d0"/></g><g transform="translate(288,54)" shape-rendering="crispEdges"><rect x="6" y="0" width="2" height="1" fill="#000"/><rect x="9" y="0" width="1" height="1" fill="#000"/><rect x="1" y="1" width="2" height="1" fill="#000"/><rect x="4" y="1" width="1" height="1" fill="#000"/><rect x="6" y="1" width="3" height="1" fill="#000"/><rect x="11" y="1" width="3" height="1" fill="#000"/><rect x="2" y="2" width="3" height="1" fill="#000"/><rect x="6" y="2" width="3" height="1" fill="#000"/><rect x="10" y="2" width="2" height="1" fill="#000"/><rect x="13" y="2" width="1" height="1" fill="#000"/><rect x="1" y="3" width="1" height="1" fill="#000"/><rect x="4" y="3" width="7" height="1" fill="#000"/><rect x="2" y="4" width="3" height="1" fill="#000"/><rect x="6" y="4" width="1" height="1" fill="#000"/><rect x="7" y="4" width="1" height="1" fill="#808080"/><rect x="8" y="4" width="1" height="1" fill="#000"/><rect x="10" y="4" width="4" height="1" fill="#000"/><rect x="1" y="5" width="1" height="1" fill="#000"/><rect x="5" y="5" width="5" height="1" fill="#000"/><rect x="14" y="5" width="1" height="1" fill="#000"/><rect x="2" y="6" width="4" height="1" fill="#000"/><rect x="6" y="6" width="3" height="1" fill="#fff"/><rect x="9" y="6" width="4" height="1" fill="#000"/><rect x="1" y="7" width="1" height="1" fill="#000"/><rect x="4" y="7" width="2" height="1" fill="#000"/><rect x="6" y="7" width="3" height="1" fill="#fff"/><rect x="9" y="7" width="2" height="1" fill="#000"/><rect x="13" y="7" width="1" height="1" fill="#000"/><rect x="3" y="8" width="2" height="1" fill="#000"/><rect x="6" y="8" width="3" height="1" fill="#000"/><rect x="10" y="8" width="2" height="1" fill="#000"/><rect x="2" y="9" width="2" height="1" fill="#000"/><rect x="6" y="9" width="3" height="1" fill="#000"/><rect x="11" y="9" width="2" height="1" fill="#000"/><rect x="1" y="10" width="2" height="1" fill="#000"/><rect x="5" y="10" width="5" height="1" fill="#000"/><rect x="12" y="10" width="2" height="1" fill="#000"/><rect x="1" y="11" width="1" height="1" fill="#000"/><rect x="5" y="11" width="2" height="1" fill="#000"/><rect x="8" y="11" width="2" height="1" fill="#000"/><rect x="13" y="11" width="1" height="1" fill="#000"/><rect x="4" y="12" width="3" height="1" fill="#000"/><rect x="8" y="12" width="3" height="1" fill="#000"/></g><g transform="translate(310,53)"><path d="M7 1h8l-2 3 2.5 2v7h-6z" fill="#faeaea" stroke="#900020" stroke-width="1"/><path d="M2 3h7l-2 3 2.5 2.5v6.5h-8.5v-6.5l2.5-2.5z" fill="#faeaea" stroke="#900020" stroke-width="1"/><path d="M7.5 9.3a2.2 2.2 0 1 0 0 3.4M3 10.4h3.5M3 11.6h3.5" fill="none" stroke="#1010c0" stroke-width="1.1"/><path d="M13.5 6.3a1.8 1.8 0 1 0 0 3M10 7.3h2.6M10 8.4h2.6" fill="none" stroke="#1010c0" stroke-width="1"/></g><g transform="translate(340,53)"><rect x="9" y="1" width="7" height="6" fill="#c8c8c8"/><rect x="0" y="9" width="4" height="5" fill="#c8c8c8"/><path d="M0 4L2 1h5l3 3v1H0z" fill="#e00000"/><rect x="0" y="5" width="6" height="5" fill="#fff"/><rect x="1" y="6" width="2" height="2" fill="#007070"/><rect x="0" y="9" width="1" height="1" fill="#e00000"/><rect x="1" y="10" width="3" height="1" fill="#e00000"/><rect x="4" y="6" width="1" height="4" fill="#000"/><path d="M7 6h2v-1h6v4h1v3h-2l-1-2h-3l-1 2H5V9h2z" fill="#e00000"/><rect x="10" y="6" width="3" height="3" fill="#c8c8c8"/><rect x="9" y="8" width="2" height="2" fill="#40c8c8"/><circle cx="6.3" cy="13" r="2.2" fill="#c8c800" stroke="#000" stroke-width="1.3"/><rect x="10" y="10" width="5" height="5" rx="1" fill="#c8c8c8" stroke="#000" stroke-width="1.3"/><rect x="12" y="12" width="1.5" height="1.5" fill="#000"/></g><g transform="translate(364,55)"><rect x="0.6" y="0.6" width="3.8" height="11.8" rx="1.4" fill="#e020e0" stroke="#000" stroke-width="1.2"/><rect x="1.2" y="1.4" width="2.6" height="5" fill="#fff"/><rect x="2" y="2.5" width="1" height="1" fill="#666"/><rect x="2" y="4.5" width="1" height="1" fill="#666"/><rect x="2" y="9" width="1" height="1" fill="#602060"/><rect x="6.6" y="0.6" width="3.8" height="11.8" rx="1.4" fill="#e020e0" stroke="#000" stroke-width="1.2"/><rect x="7.2" y="1.4" width="2.6" height="5" fill="#fff"/><rect x="8" y="2.5" width="1" height="1" fill="#666"/><rect x="8" y="4.5" width="1" height="1" fill="#666"/><rect x="8" y="9" width="1" height="1" fill="#602060"/></g><g transform="translate(384,53)"><rect x="9" y="4" width="6" height="11" fill="#fff"/><path d="M7 4.5a1.8 1.8 0 1 1 3.4 0l.6.5-1 1 2 1.5v3.5h-1.5v4H8z" fill="#909090"/><path d="M1.8 2.6a2 2 0 1 1 4 0L6.8 3.4 5.2 5 7.6 6v4H0.5V6l2-1z" fill="#000"/><rect x="1" y="10" width="6" height="5" fill="#e8e8a0"/><path d="M2.3 11.5h1.5M2.3 13h1.5M4.8 11.5h1.5M4.8 13h1.5" fill="none" stroke="#ffffd0" stroke-width="1"/></g><g transform="translate(419,54)"><rect x="0.6" y="0.6" width="11.2" height="11.8" rx="2" fill="#cdcdcd" stroke="#000" stroke-width="1.2"/><path d="M3 10V2.6h2.3a1.9 1.9 0 0 1 0 3.8H3" fill="none" stroke="#1818d0" stroke-width="1.3"/><rect x="8" y="2" width="2" height="6" fill="#e00020"/><rect x="8" y="9" width="2" height="2" fill="#e00020"/></g><g transform="translate(439,53)"><path d="M4 4.5L0.8 7.5 4 10.5" fill="none" stroke="#000" stroke-width="1.5"/><rect x="5.6" y="0.6" width="3.8" height="13.8" fill="#20e0e0" stroke="#000" stroke-width="1.2"/><rect x="6.2" y="5" width="2.6" height="3.4" fill="#fff"/><rect x="7" y="2.5" width="1" height="1" fill="#003"/><rect x="7" y="4.2" width="1" height="1" fill="#003"/><rect x="7" y="11.5" width="1" height="1" fill="#044"/><rect x="11.6" y="0.6" width="3.8" height="13.8" fill="#20e0e0" stroke="#000" stroke-width="1.2"/><rect x="12.2" y="5" width="2.6" height="3.4" fill="#fff"/><rect x="13" y="2.5" width="1" height="1" fill="#003"/><rect x="13" y="4.2" width="1" height="1" fill="#003"/><rect x="13" y="11.5" width="1" height="1" fill="#044"/></g><g transform="translate(461,53)"><rect x="0.6" y="0.6" width="3.8" height="13.8" fill="#20e0e0" stroke="#000" stroke-width="1.2"/><rect x="1.2" y="5" width="2.6" height="3.4" fill="#fff"/><rect x="2" y="2.5" width="1" height="1" fill="#003"/><rect x="2" y="4.2" width="1" height="1" fill="#003"/><rect x="2" y="11.5" width="1" height="1" fill="#044"/><rect x="6.6" y="0.6" width="3.8" height="13.8" fill="#20e0e0" stroke="#000" stroke-width="1.2"/><rect x="7.2" y="5" width="2.6" height="3.4" fill="#fff"/><rect x="8" y="2.5" width="1" height="1" fill="#003"/><rect x="8" y="4.2" width="1" height="1" fill="#003"/><rect x="8" y="11.5" width="1" height="1" fill="#044"/><path d="M12 4.5L15.2 7.5 12 10.5" fill="none" stroke="#000" stroke-width="1.5"/></g><g transform="translate(483,53)" shape-rendering="crispEdges"><rect x="0" y="0" width="14" height="1" fill="#000"/><rect x="0" y="1" width="1" height="1" fill="#000"/><rect x="1" y="1" width="1" height="1" fill="#c0c0c0"/><rect x="2" y="1" width="1" height="1" fill="#d8d8d8"/><rect x="3" y="1" width="3" height="1" fill="#808080"/><rect x="6" y="1" width="1" height="1" fill="#000"/><rect x="7" y="1" width="2" height="1" fill="#808080"/><rect x="9" y="1" width="1" height="1" fill="#d8d8d8"/><rect x="10" y="1" width="3" height="1" fill="#c0c0c0"/><rect x="13" y="1" width="1" height="1" fill="#000"/><rect x="0" y="2" width="1" height="1" fill="#000"/><rect x="1" y="2" width="1" height="1" fill="#c0c0c0"/><rect x="2" y="2" width="1" height="1" fill="#d8d8d8"/><rect x="3" y="2" width="3" height="1" fill="#808080"/><rect x="6" y="2" width="1" height="1" fill="#000"/><rect x="7" y="2" width="2" height="1" fill="#808080"/><rect x="9" y="2" width="1" height="1" fill="#d8d8d8"/><rect x="10" y="2" width="3" height="1" fill="#c0c0c0"/><rect x="13" y="2" width="1" height="1" fill="#000"/><rect x="0" y="3" width="1" height="1" fill="#000"/><rect x="1" y="3" width="1" height="1" fill="#c0c0c0"/><rect x="2" y="3" width="1" height="1" fill="#d8d8d8"/><rect x="3" y="3" width="3" height="1" fill="#808080"/><rect x="6" y="3" width="1" height="1" fill="#000"/><rect x="7" y="3" width="2" height="1" fill="#808080"/><rect x="9" y="3" width="1" height="1" fill="#d8d8d8"/><rect x="10" y="3" width="4" height="1" fill="#c0c0c0"/><rect x="14" y="3" width="1" height="1" fill="#000"/><rect x="0" y="4" width="1" height="1" fill="#000"/><rect x="1" y="4" width="1" height="1" fill="#c0c0c0"/><rect x="2" y="4" width="1" height="1" fill="#d8d8d8"/><rect x="3" y="4" width="3" height="1" fill="#808080"/><rect x="6" y="4" width="1" height="1" fill="#000"/><rect x="7" y="4" width="2" height="1" fill="#808080"/><rect x="9" y="4" width="1" height="1" fill="#d8d8d8"/><rect x="10" y="4" width="4" height="1" fill="#c0c0c0"/><rect x="14" y="4" width="1" height="1" fill="#000"/><rect x="0" y="5" width="1" height="1" fill="#000"/><rect x="1" y="5" width="1" height="1" fill="#c0c0c0"/><rect x="2" y="5" width="9" height="1" fill="#d8d8d8"/><rect x="11" y="5" width="3" height="1" fill="#c0c0c0"/><rect x="14" y="5" width="1" height="1" fill="#000"/><rect x="0" y="6" width="1" height="1" fill="#000"/><rect x="1" y="6" width="1" height="1" fill="#c0c0c0"/><rect x="2" y="6" width="10" height="1" fill="#fff"/><rect x="12" y="6" width="2" height="1" fill="#c0c0c0"/><rect x="14" y="6" width="1" height="1" fill="#000"/><rect x="0" y="7" width="1" height="1" fill="#000"/><rect x="1" y="7" width="1" height="1" fill="#c0c0c0"/><rect x="2" y="7" width="1" height="1" fill="#fff"/><rect x="3" y="7" width="2" height="1" fill="#000"/><rect x="5" y="7" width="1" height="1" fill="#fff"/><rect x="6" y="7" width="3" height="1" fill="#000"/><rect x="9" y="7" width="1" height="1" fill="#fff"/><rect x="10" y="7" width="2" height="1" fill="#000"/><rect x="12" y="7" width="1" height="1" fill="#fff"/><rect x="13" y="7" width="1" height="1" fill="#c0c0c0"/><rect x="14" y="7" width="1" height="1" fill="#000"/><rect x="0" y="8" width="1" height="1" fill="#000"/><rect x="1" y="8" width="1" height="1" fill="#c0c0c0"/><rect x="2" y="8" width="10" height="1" fill="#fff"/><rect x="12" y="8" width="2" height="1" fill="#c0c0c0"/><rect x="14" y="8" width="1" height="1" fill="#000"/><rect x="0" y="9" width="1" height="1" fill="#000"/><rect x="1" y="9" width="1" height="1" fill="#c0c0c0"/><rect x="2" y="9" width="1" height="1" fill="#fff"/><rect x="3" y="9" width="1" height="1" fill="#000"/><rect x="4" y="9" width="1" height="1" fill="#fff"/><rect x="5" y="9" width="3" height="1" fill="#000"/><rect x="8" y="9" width="1" height="1" fill="#fff"/><rect x="9" y="9" width="2" height="1" fill="#000"/><rect x="11" y="9" width="1" height="1" fill="#fff"/><rect x="12" y="9" width="2" height="1" fill="#c0c0c0"/><rect x="14" y="9" width="1" height="1" fill="#000"/><rect x="0" y="10" width="1" height="1" fill="#000"/><rect x="1" y="10" width="1" height="1" fill="#c0c0c0"/><rect x="2" y="10" width="10" height="1" fill="#fff"/><rect x="12" y="10" width="2" height="1" fill="#c0c0c0"/><rect x="14" y="10" width="1" height="1" fill="#000"/><rect x="0" y="11" width="1" height="1" fill="#000"/><rect x="1" y="11" width="14" height="1" fill="#c0c0c0"/><rect x="0" y="12" width="15" height="1" fill="#000"/></g><g transform="translate(516,54)"><path d="M3.5 0.5c-.8 2 .2 3.6 1.2 4.6L9 10M8.5 0.5c.8 2-.2 3.6-1.2 4.6L3 10" fill="none" stroke="#000" stroke-width="1.5"/><ellipse cx="2.4" cy="11.5" rx="1.7" ry="2" fill="#fff" stroke="#0000c8" stroke-width="1.5"/><ellipse cx="9.6" cy="11.5" rx="1.7" ry="2" fill="#fff" stroke="#0000c8" stroke-width="1.5"/></g><g transform="translate(538,55)" shape-rendering="crispEdges"><rect x="0" y="0" width="7" height="1" fill="#000"/><rect x="0" y="1" width="1" height="1" fill="#000"/><rect x="1" y="1" width="5" height="1" fill="#fff"/><rect x="6" y="1" width="2" height="1" fill="#000"/><rect x="0" y="2" width="1" height="1" fill="#000"/><rect x="1" y="2" width="1" height="1" fill="#fff"/><rect x="2" y="2" width="3" height="1" fill="#000"/><rect x="5" y="2" width="1" height="1" fill="#fff"/><rect x="6" y="2" width="1" height="1" fill="#000"/><rect x="7" y="2" width="1" height="1" fill="#fff"/><rect x="8" y="2" width="1" height="1" fill="#000"/><rect x="0" y="3" width="1" height="1" fill="#000"/><rect x="1" y="3" width="5" height="1" fill="#fff"/><rect x="6" y="3" width="7" height="1" fill="#000"/><rect x="0" y="4" width="1" height="1" fill="#000"/><rect x="1" y="4" width="1" height="1" fill="#fff"/><rect x="2" y="4" width="5" height="1" fill="#000"/><rect x="7" y="4" width="5" height="1" fill="#fff"/><rect x="12" y="4" width="2" height="1" fill="#000"/><rect x="0" y="5" width="1" height="1" fill="#000"/><rect x="1" y="5" width="5" height="1" fill="#fff"/><rect x="6" y="5" width="1" height="1" fill="#000"/><rect x="7" y="5" width="1" height="1" fill="#fff"/><rect x="8" y="5" width="3" height="1" fill="#000"/><rect x="11" y="5" width="1" height="1" fill="#fff"/><rect x="12" y="5" width="1" height="1" fill="#000"/><rect x="13" y="5" width="1" height="1" fill="#fff"/><rect x="14" y="5" width="1" height="1" fill="#000"/><rect x="0" y="6" width="1" height="1" fill="#000"/><rect x="1" y="6" width="1" height="1" fill="#fff"/><rect x="2" y="6" width="3" height="1" fill="#000"/><rect x="5" y="6" width="1" height="1" fill="#fff"/><rect x="6" y="6" width="1" height="1" fill="#000"/><rect x="7" y="6" width="5" height="1" fill="#fff"/><rect x="12" y="6" width="4" height="1" fill="#000"/><rect x="0" y="7" width="1" height="1" fill="#000"/><rect x="1" y="7" width="5" height="1" fill="#fff"/><rect x="6" y="7" width="1" height="1" fill="#000"/><rect x="7" y="7" width="1" height="1" fill="#fff"/><rect x="8" y="7" width="4" height="1" fill="#000"/><rect x="12" y="7" width="3" height="1" fill="#fff"/><rect x="15" y="7" width="1" height="1" fill="#000"/><rect x="0" y="8" width="7" height="1" fill="#000"/><rect x="7" y="8" width="8" height="1" fill="#fff"/><rect x="15" y="8" width="1" height="1" fill="#000"/><rect x="6" y="9" width="1" height="1" fill="#000"/><rect x="7" y="9" width="1" height="1" fill="#fff"/><rect x="8" y="9" width="6" height="1" fill="#000"/><rect x="14" y="9" width="1" height="1" fill="#fff"/><rect x="15" y="9" width="1" height="1" fill="#000"/><rect x="6" y="10" width="1" height="1" fill="#000"/><rect x="7" y="10" width="8" height="1" fill="#fff"/><rect x="15" y="10" width="1" height="1" fill="#000"/><rect x="6" y="11" width="10" height="1" fill="#000"/></g><g transform="translate(560,53)" shape-rendering="crispEdges"><rect x="6" y="0" width="1" height="1" fill="#000"/><rect x="7" y="0" width="2" height="1" fill="#ffff00"/><rect x="9" y="0" width="1" height="1" fill="#000"/><rect x="1" y="1" width="5" height="1" fill="#000"/><rect x="6" y="1" width="1" height="1" fill="#ffff00"/><rect x="7" y="1" width="2" height="1" fill="#000"/><rect x="9" y="1" width="1" height="1" fill="#ffff00"/><rect x="10" y="1" width="5" height="1" fill="#000"/><rect x="0" y="2" width="1" height="1" fill="#000"/><rect x="1" y="2" width="4" height="1" fill="#808000"/><rect x="5" y="2" width="1" height="1" fill="#000"/><rect x="6" y="2" width="4" height="1" fill="#ffff00"/><rect x="10" y="2" width="1" height="1" fill="#000"/><rect x="11" y="2" width="4" height="1" fill="#808000"/><rect x="15" y="2" width="1" height="1" fill="#000"/><rect x="0" y="3" width="1" height="1" fill="#000"/><rect x="1" y="3" width="6" height="1" fill="#808000"/><rect x="7" y="3" width="2" height="1" fill="#000"/><rect x="9" y="3" width="6" height="1" fill="#808000"/><rect x="15" y="3" width="1" height="1" fill="#000"/><rect x="0" y="4" width="1" height="1" fill="#000"/><rect x="1" y="4" width="14" height="1" fill="#808000"/><rect x="15" y="4" width="1" height="1" fill="#000"/><rect x="0" y="5" width="1" height="1" fill="#000"/><rect x="1" y="5" width="14" height="1" fill="#808000"/><rect x="15" y="5" width="1" height="1" fill="#000"/><rect x="0" y="6" width="1" height="1" fill="#000"/><rect x="1" y="6" width="14" height="1" fill="#808000"/><rect x="15" y="6" width="1" height="1" fill="#000"/><rect x="0" y="7" width="1" height="1" fill="#000"/><rect x="1" y="7" width="5" height="1" fill="#808000"/><rect x="6" y="7" width="10" height="1" fill="#000080"/><rect x="0" y="8" width="1" height="1" fill="#000"/><rect x="1" y="8" width="5" height="1" fill="#808000"/><rect x="6" y="8" width="1" height="1" fill="#000080"/><rect x="7" y="8" width="6" height="1" fill="#fff"/><rect x="13" y="8" width="1" height="1" fill="#000080"/><rect x="14" y="8" width="1" height="1" fill="#fff"/><rect x="15" y="8" width="1" height="1" fill="#000080"/><rect x="0" y="9" width="1" height="1" fill="#000"/><rect x="1" y="9" width="5" height="1" fill="#808000"/><rect x="6" y="9" width="1" height="1" fill="#000080"/><rect x="7" y="9" width="1" height="1" fill="#fff"/><rect x="8" y="9" width="4" height="1" fill="#000080"/><rect x="12" y="9" width="3" height="1" fill="#fff"/><rect x="15" y="9" width="1" height="1" fill="#000080"/><rect x="0" y="10" width="1" height="1" fill="#000"/><rect x="1" y="10" width="5" height="1" fill="#808000"/><rect x="6" y="10" width="1" height="1" fill="#000080"/><rect x="7" y="10" width="8" height="1" fill="#fff"/><rect x="15" y="10" width="1" height="1" fill="#000080"/><rect x="0" y="11" width="1" height="1" fill="#000"/><rect x="1" y="11" width="5" height="1" fill="#808000"/><rect x="6" y="11" width="1" height="1" fill="#000080"/><rect x="7" y="11" width="1" height="1" fill="#fff"/><rect x="8" y="11" width="6" height="1" fill="#000080"/><rect x="14" y="11" width="1" height="1" fill="#fff"/><rect x="15" y="11" width="1" height="1" fill="#000080"/><rect x="1" y="12" width="5" height="1" fill="#000"/><rect x="6" y="12" width="1" height="1" fill="#000080"/><rect x="7" y="12" width="8" height="1" fill="#fff"/><rect x="15" y="12" width="1" height="1" fill="#000080"/><rect x="6" y="13" width="10" height="1" fill="#000080"/></g><g transform="translate(597,53.5)"><path d="M1.3 3.4c0-2.6 4.6-2.6 4.6-.2 0 1.8-3.8 1.8-3.8 3.8 0 1.4 2.8 1 2.8 .2M3.4 9.6l1.3 1.5-1.3 1.5-1.3-1.5z" fill="none" stroke="#3a3a00" stroke-width="2"/><path d="M1.3 3.4c0-2.6 4.6-2.6 4.6-.2 0 1.8-3.8 1.8-3.8 3.8 0 1.4 2.8 1 2.8 .2M3.4 10.3l.7.8-.7.8-.7-.8z" fill="none" stroke="#f4f468" stroke-width="0.9"/></g><g transform="translate(615,54)" shape-rendering="crispEdges"><rect x="4" y="0" width="8" height="1" fill="#000"/><rect x="3" y="1" width="1" height="1" fill="#000"/><rect x="4" y="1" width="8" height="1" fill="#fff"/><rect x="12" y="1" width="1" height="1" fill="#000"/><rect x="2" y="2" width="1" height="1" fill="#000"/><rect x="3" y="2" width="10" height="1" fill="#fff"/><rect x="13" y="2" width="1" height="1" fill="#000"/><rect x="2" y="3" width="13" height="1" fill="#000"/><rect x="2" y="4" width="1" height="1" fill="#000"/><rect x="3" y="4" width="9" height="1" fill="#fff"/><rect x="12" y="4" width="2" height="1" fill="#a00000"/><rect x="14" y="4" width="1" height="1" fill="#000"/><rect x="2" y="5" width="1" height="1" fill="#000"/><rect x="3" y="5" width="6" height="1" fill="#fff"/><rect x="9" y="5" width="2" height="1" fill="#c0c0c0"/><rect x="11" y="5" width="2" height="1" fill="#a00000"/><rect x="13" y="5" width="1" height="1" fill="#fff"/><rect x="14" y="5" width="1" height="1" fill="#000"/><rect x="0" y="6" width="10" height="1" fill="#000"/><rect x="10" y="6" width="1" height="1" fill="#c0c0c0"/><rect x="11" y="6" width="3" height="1" fill="#fff"/><rect x="14" y="6" width="1" height="1" fill="#000"/><rect x="0" y="7" width="1" height="1" fill="#000"/><rect x="1" y="7" width="8" height="1" fill="#fff"/><rect x="9" y="7" width="1" height="1" fill="#000"/><rect x="10" y="7" width="3" height="1" fill="#f6c8c8"/><rect x="13" y="7" width="1" height="1" fill="#fff"/><rect x="14" y="7" width="1" height="1" fill="#000"/><rect x="0" y="8" width="1" height="1" fill="#000"/><rect x="1" y="8" width="1" height="1" fill="#fff"/><rect x="2" y="8" width="2" height="1" fill="#c0c0c0"/><rect x="4" y="8" width="1" height="1" fill="#fff"/><rect x="5" y="8" width="4" height="1" fill="#c0c0c0"/><rect x="9" y="8" width="1" height="1" fill="#000"/><rect x="10" y="8" width="4" height="1" fill="#fff"/><rect x="14" y="8" width="1" height="1" fill="#000"/><rect x="0" y="9" width="1" height="1" fill="#000"/><rect x="1" y="9" width="8" height="1" fill="#fff"/><rect x="9" y="9" width="6" height="1" fill="#000"/><rect x="0" y="10" width="1" height="1" fill="#000"/><rect x="1" y="10" width="1" height="1" fill="#fff"/><rect x="2" y="10" width="4" height="1" fill="#c0c0c0"/><rect x="6" y="10" width="1" height="1" fill="#fff"/><rect x="7" y="10" width="1" height="1" fill="#c0c0c0"/><rect x="8" y="10" width="1" height="1" fill="#fff"/><rect x="9" y="10" width="1" height="1" fill="#000"/><rect x="0" y="11" width="1" height="1" fill="#000"/><rect x="1" y="11" width="8" height="1" fill="#fff"/><rect x="9" y="11" width="1" height="1" fill="#000"/><rect x="0" y="12" width="10" height="1" fill="#000"/></g><g transform="translate(637,53)"><circle cx="8" cy="8" r="7.6" fill="#0000e0" stroke="#101060" stroke-width="1" stroke-dasharray="1.2 1"/><path d="M5 1.5l4-.5 1 2-2 3 1.5 2.5L8 11l2 3.5-2.5.8L5 12l1-3-2-3z" fill="#10d040"/><path d="M12 4l2 1.5.8 3-1.5 2-1.3-2z" fill="#10d040"/><path d="M1.5 6l1.5 1-.5 3-1.5-1.5z" fill="#10d040"/></g><g transform="translate(659,53)"><circle cx="8" cy="8" r="7.6" fill="#0000e0" stroke="#106030" stroke-width="1" stroke-dasharray="1.2 1"/><path d="M2 4l3-2.5h2L5 5 2.5 8 1 7z" fill="#10c040"/><path d="M11 1.5l3 3-1 2-2-2z" fill="#10c040"/><path d="M12 9l3-1-1 4-3 2.5z" fill="#10c040"/><path d="M2 10l2 1 1 3-2-1z" fill="#10c040"/><path d="M5.2 5.6c0-3.4 6-3.4 6 0 0 2.2-3 2.2-3 4.6" fill="none" stroke="#ffee40" stroke-width="2"/><rect x="7" y="11.5" width="2.2" height="2.2" fill="#fff"/></g><g transform="translate(684,53)"><circle cx="5" cy="2" r="1.7" fill="#0000c8"/><path d="M1.2 6.2c1.5.8 2.5-.6 4.3-.3v5.3c.6 1.6 1.8.3 2.6-.6" fill="none" stroke="#0000c8" stroke-width="2.3"/></g><g transform="translate(714,54)" shape-rendering="crispEdges"><rect x="2" y="0" width="8" height="1" fill="#000"/><rect x="2" y="1" width="1" height="1" fill="#000"/><rect x="3" y="1" width="2" height="1" fill="#20e0e0"/><rect x="5" y="1" width="1" height="1" fill="#000"/><rect x="6" y="1" width="3" height="1" fill="#fff"/><rect x="9" y="1" width="1" height="1" fill="#000"/><rect x="2" y="2" width="1" height="1" fill="#000"/><rect x="3" y="2" width="3" height="1" fill="#20e0e0"/><rect x="6" y="2" width="1" height="1" fill="#000"/><rect x="7" y="2" width="2" height="1" fill="#fff"/><rect x="9" y="2" width="1" height="1" fill="#000"/><rect x="2" y="3" width="1" height="1" fill="#000"/><rect x="3" y="3" width="4" height="1" fill="#20e0e0"/><rect x="7" y="3" width="1" height="1" fill="#000"/><rect x="8" y="3" width="1" height="1" fill="#fff"/><rect x="9" y="3" width="1" height="1" fill="#000"/><rect x="12" y="3" width="1" height="1" fill="#000"/><rect x="2" y="4" width="1" height="1" fill="#000"/><rect x="3" y="4" width="4" height="1" fill="#20e0e0"/><rect x="7" y="4" width="1" height="1" fill="#000"/><rect x="8" y="4" width="1" height="1" fill="#fff"/><rect x="9" y="4" width="1" height="1" fill="#000"/><rect x="11" y="4" width="2" height="1" fill="#000"/><rect x="2" y="5" width="1" height="1" fill="#000"/><rect x="3" y="5" width="4" height="1" fill="#20e0e0"/><rect x="7" y="5" width="1" height="1" fill="#000"/><rect x="8" y="5" width="1" height="1" fill="#fff"/><rect x="9" y="5" width="7" height="1" fill="#000"/><rect x="2" y="6" width="1" height="1" fill="#000"/><rect x="3" y="6" width="3" height="1" fill="#20e0e0"/><rect x="6" y="6" width="2" height="1" fill="#000"/><rect x="8" y="6" width="1" height="1" fill="#fff"/><rect x="9" y="6" width="1" height="1" fill="#000"/><rect x="11" y="6" width="2" height="1" fill="#000"/><rect x="2" y="7" width="1" height="1" fill="#000"/><rect x="3" y="7" width="4" height="1" fill="#20e0e0"/><rect x="7" y="7" width="1" height="1" fill="#000"/><rect x="8" y="7" width="1" height="1" fill="#fff"/><rect x="9" y="7" width="1" height="1" fill="#000"/><rect x="12" y="7" width="1" height="1" fill="#000"/><rect x="2" y="8" width="1" height="1" fill="#000"/><rect x="3" y="8" width="4" height="1" fill="#20e0e0"/><rect x="7" y="8" width="1" height="1" fill="#000"/><rect x="8" y="8" width="1" height="1" fill="#fff"/><rect x="9" y="8" width="1" height="1" fill="#000"/><rect x="2" y="9" width="1" height="1" fill="#000"/><rect x="3" y="9" width="4" height="1" fill="#20e0e0"/><rect x="7" y="9" width="1" height="1" fill="#000"/><rect x="8" y="9" width="1" height="1" fill="#fff"/><rect x="9" y="9" width="1" height="1" fill="#000"/><rect x="1" y="10" width="2" height="1" fill="#000"/><rect x="3" y="10" width="4" height="1" fill="#20e0e0"/><rect x="7" y="10" width="9" height="1" fill="#000"/><rect x="3" y="11" width="1" height="1" fill="#000"/><rect x="4" y="11" width="3" height="1" fill="#20e0e0"/><rect x="7" y="11" width="1" height="1" fill="#000"/><rect x="4" y="12" width="1" height="1" fill="#000"/><rect x="5" y="12" width="2" height="1" fill="#20e0e0"/><rect x="7" y="12" width="1" height="1" fill="#000"/><rect x="5" y="13" width="3" height="1" fill="#000"/></g><g transform="translate(3,3)"><ellipse cx="3.4" cy="6.8" rx="2.6" ry="2.8" fill="#e8e800" stroke="#707000" stroke-width="1"/><path d="M0.3 15.5v-4.5c0-2 6-2 6 0v4.5z" fill="#808000" stroke="#505000" stroke-width="0.8"/><path d="M10 16L5.5 3M10.5 16L8.5 1M11 16L12 1.5M11.5 16L14.5 5" fill="none" stroke="#e6e650" stroke-width="1.5"/><path d="M10.5 16L7.5 7M10.8 16L10.3 6M11.2 16L13.6 8" fill="none" stroke="#a8b088" stroke-width="1.3"/></g></svg>
<div class="a" style="left:26px;top:100px;width:674px;height:420px;border:1px solid #4a4f57;border-radius:6px 6px 0 0;background:linear-gradient(#b9c8da 0,#dde7f4 25px,#dfe9f5 26px);overflow:hidden"><div class="a" style="left:0;top:0;right:0;height:1px;background:rgba(255,255,255,.55)"></div></div>
<div class="a" style="left:29px;top:126px;width:668px;height:400px;background:#008000"></div>
<div class="a" style="left:697px;top:126px;width:2px;height:400px;background:#d8fbe0"></div>
<div class="a" style="left:32px;top:129px;width:660px;height:400px;background:#f0f0f0"></div>
<div class="a" style="left:690px;top:129px;width:2px;height:400px;background:#f8f8f8"></div>
<span class="t" style="left:33.30px;top:109.00px;font-size:12px;line-height:12px;color:#8c96a4;transform:scaleX(1.0059);">Auswertung Kunden/Lieferanten</span>
<div class="gb" style="left:40px;top:151px;width:237px;height:69px"></div>
<div class="a" style="left:46.6px;top:150px;width:98.4px;height:3px;background:#f0f0f0"></div>
<span class="t" style="left:48.29px;top:146.00px;font-size:12px;line-height:12px;color:#000;transform:scaleX(0.8939);">Zusatzeinstellungen</span>
<div class="gb" style="left:286px;top:151px;width:146px;height:69px"></div>
<div class="a" style="left:293.6px;top:150px;width:35.799999999999955px;height:3px;background:#f0f0f0"></div>
<span class="t" style="left:294.73px;top:146.00px;font-size:12px;line-height:12px;color:#000;transform:scaleX(0.9177);">Modus</span>
<div class="lbl" style="left:46px;top:162px;width:66px;height:20px"></div>
<span class="t" style="left:50.16px;top:166.00px;font-size:12px;line-height:12px;color:#000;transform:scaleX(0.8722);">Sortierung:</span>
<div class="sunk" style="left:112px;top:162px;width:160px;height:20px;background:#fff"></div>
<div class="btn" style="left:253px;top:164px;width:17px;height:16px"></div>
<svg style="left:258px;top:171px" width="7" height="4" shape-rendering="crispEdges"><path d="M0 0h7v1h-1v1h-1v1h-1v1h-1v-1h-1v-1h-1v-1h-1z" fill="#000"/></svg>
<span class="t" style="left:115.58px;top:167.00px;font-size:12px;line-height:12px;color:#000;transform:scaleX(0.8606);">Nummer</span>
<div class="lbl" style="left:46px;top:185px;width:66px;height:20px"></div>
<span class="t" style="left:50.00px;top:189.00px;font-size:12px;line-height:12px;color:#000;transform:scaleX(0.8925);">Anordnung:</span>
<div class="sunk" style="left:112px;top:185px;width:160px;height:20px;background:#fff"></div>
<div class="btn" style="left:253px;top:187px;width:17px;height:16px"></div>
<svg style="left:258px;top:194px" width="7" height="4" shape-rendering="crispEdges"><path d="M0 0h7v1h-1v1h-1v1h-1v1h-1v-1h-1v-1h-1v-1h-1z" fill="#000"/></svg>
<span class="t" style="left:115.51px;top:190.00px;font-size:12px;line-height:12px;color:#000;transform:scaleX(0.9351);">Nachname/Vorname/Titel</span>
<svg style="left:293px;top:164px" width="12" height="12"><circle cx="6" cy="6" r="5.5" fill="#fff"/><path d="M1.6 9.6A5.5 5.5 0 0 1 9.6 1.6" fill="none" stroke="#808080" stroke-width="1"/><path d="M2.5 8.9A4.5 4.5 0 0 1 8.9 2.5" fill="none" stroke="#404040" stroke-width="1"/><path d="M10.4 2.4A5.5 5.5 0 0 1 2.4 10.4" fill="none" stroke="#fff" stroke-width="1"/><path d="M9.5 3.1A4.5 4.5 0 0 1 3.1 9.5" fill="none" stroke="#d4d0c8" stroke-width="1"/></svg>
<svg style="left:293px;top:183px" width="12" height="12"><circle cx="6" cy="6" r="5.5" fill="#fff"/><path d="M1.6 9.6A5.5 5.5 0 0 1 9.6 1.6" fill="none" stroke="#808080" stroke-width="1"/><path d="M2.5 8.9A4.5 4.5 0 0 1 8.9 2.5" fill="none" stroke="#404040" stroke-width="1"/><path d="M10.4 2.4A5.5 5.5 0 0 1 2.4 10.4" fill="none" stroke="#fff" stroke-width="1"/><path d="M9.5 3.1A4.5 4.5 0 0 1 3.1 9.5" fill="none" stroke="#d4d0c8" stroke-width="1"/></svg>
<svg style="left:293px;top:201px" width="12" height="12"><circle cx="6" cy="6" r="5.5" fill="#fff"/><path d="M1.6 9.6A5.5 5.5 0 0 1 9.6 1.6" fill="none" stroke="#808080" stroke-width="1"/><path d="M2.5 8.9A4.5 4.5 0 0 1 8.9 2.5" fill="none" stroke="#404040" stroke-width="1"/><path d="M10.4 2.4A5.5 5.5 0 0 1 2.4 10.4" fill="none" stroke="#fff" stroke-width="1"/><path d="M9.5 3.1A4.5 4.5 0 0 1 3.1 9.5" fill="none" stroke="#d4d0c8" stroke-width="1"/><circle cx="6" cy="6" r="2" fill="#000"/></svg>
<span class="t" style="left:309.53px;top:164.00px;font-size:12px;line-height:12px;color:#000;transform:scaleX(0.9205);">Liste</span>
<span class="t" style="left:309.97px;top:183.00px;font-size:12px;line-height:12px;color:#000;transform:scaleX(0.8611);">Serienbrief</span>
<span class="t" style="left:310.00px;top:201.00px;font-size:12px;line-height:12px;color:#000;transform:scaleX(0.8908);">Adressetiketten</span>
<div class="a" style="left:37px;top:253px;width:649px;height:270px;background:#f0f0f0;border:1px solid;border-color:#fff #9a9a9a #9a9a9a #fff"></div>
<div class="a" style="left:198px;top:234px;width:162px;height:19px;background:#f0f0f0;border-top:1px solid #fff;border-right:1px solid #6e6e6e;border-radius:0 2px 0 0"></div>
<div class="a" style="left:37px;top:234px;width:161px;height:20px;background:#f0f0f0;border-top:1px solid #fff;border-left:1px solid #fff;border-right:1px solid #7a7a7a;border-radius:2px 2px 0 0"></div>
<span class="t" style="left:69.16px;top:239.00px;font-size:12px;line-height:12px;color:#000;font-weight:bold;transform:scaleX(0.9837);">Globale Auswahl</span>
<span class="t" style="left:244.75px;top:239.00px;font-size:12px;line-height:12px;color:#000;transform:scaleX(0.8907);">Einzelauswahl</span>
<div class="lbl" style="left:45px;top:264px;width:59px;height:20px"></div>
<span class="t" style="left:48.60px;top:268.00px;font-size:12px;line-height:12px;color:#000;transform:scaleX(0.8444);">Filter:</span>
<div class="sunk" style="left:105px;top:264px;width:167px;height:20px;background:#fff"></div>
<div class="btn" style="left:253px;top:266px;width:17px;height:16px"></div>
<svg style="left:258px;top:273px" width="7" height="4" shape-rendering="crispEdges"><path d="M0 0h7v1h-1v1h-1v1h-1v1h-1v-1h-1v-1h-1v-1h-1z" fill="#000"/></svg>
<span class="t" style="left:109.15px;top:269.00px;font-size:12px;line-height:12px;color:#000;transform:scaleX(0.9036);">alle Kunden/Lieferanten</span>
<div class="lbl" style="left:45px;top:287px;width:59px;height:20px"></div>
<span class="t" style="left:48.58px;top:291.00px;font-size:12px;line-height:12px;color:#000;transform:scaleX(0.8669);">E-Mail:</span>
<div class="sunk" style="left:105px;top:287px;width:167px;height:20px;background:#fff"></div>
<div class="btn" style="left:253px;top:289px;width:17px;height:16px"></div>
<svg style="left:258px;top:296px" width="7" height="4" shape-rendering="crispEdges"><path d="M0 0h7v1h-1v1h-1v1h-1v1h-1v-1h-1v-1h-1v-1h-1z" fill="#000"/></svg>
<span class="t" style="left:109.00px;top:292.00px;font-size:12px;line-height:12px;color:#000;transform:scaleX(0.8741);">Alle Einträge</span>
<div class="gb" style="left:47px;top:327px;width:122px;height:200px"></div>
<div class="a" style="left:54.6px;top:326px;width:36.4px;height:3px;background:#f0f0f0"></div>
<span class="t" style="left:55.75px;top:322.00px;font-size:12px;line-height:12px;color:#000;transform:scaleX(0.8950);">Länder</span>
<div class="a" style="left:53px;top:337px;width:109px;height:159px;background:#fff;border:1px solid;border-color:#6a6a6a #fff #fff #6a6a6a"></div>
<div class="sel" style="left:54px;top:338px;width:107px;height:27px"></div>
<div class="a" style="left:54px;top:338px;width:107px;height:157px;overflow:hidden">
<span class="t" style="left:2.73px;top:2.00px;font-size:12px;line-height:12px;color:#fff;transform:scaleX(0.9138);">Deutschland</span>
<span class="t" style="left:3.11px;top:15.00px;font-size:12px;line-height:12px;color:#fff;transform:scaleX(0.8844);">Österreich</span>
</div>
<div class="gb" style="left:175px;top:327px;width:122px;height:200px"></div>
<div class="a" style="left:182.4px;top:326px;width:49.599999999999994px;height:3px;background:#f0f0f0"></div>
<span class="t" style="left:183.53px;top:322.00px;font-size:12px;line-height:12px;color:#000;transform:scaleX(0.9184);">Branchen</span>
<div class="a" style="left:181px;top:337px;width:109px;height:159px;background:#fff;border:1px solid;border-color:#6a6a6a #fff #fff #6a6a6a"></div>
<div class="sel" style="left:182px;top:338px;width:90px;height:156px"></div>
<div class="a" style="left:182px;top:338px;width:90px;height:157px;overflow:hidden">
<span class="t" style="left:3.40px;top:15.00px;font-size:12px;line-height:12px;color:#fff;transform:scaleX(0.8802);">Agrarproukte</span>
<span class="t" style="left:3.40px;top:28.00px;font-size:12px;line-height:12px;color:#fff;transform:scaleX(0.8700);">Altenpflege</span>
<span class="t" style="left:2.57px;top:41.00px;font-size:12px;line-height:12px;color:#fff;transform:scaleX(0.8700);">Bürobedarf</span>
<span class="t" style="left:2.57px;top:54.00px;font-size:12px;line-height:12px;color:#fff;transform:scaleX(0.8700);">Direktvermarktung</span>
<span class="t" style="left:2.57px;top:67.00px;font-size:12px;line-height:12px;color:#fff;transform:scaleX(0.8700);">Futtermittelerzeugung</span>
<span class="t" style="left:2.57px;top:80.00px;font-size:12px;line-height:12px;color:#fff;transform:scaleX(0.8700);">Holzhandl</span>
<span class="t" style="left:2.57px;top:93.00px;font-size:12px;line-height:12px;color:#fff;transform:scaleX(0.8700);">Kalbinnenaufzucht</span>
<span class="t" style="left:2.57px;top:106.00px;font-size:12px;line-height:12px;color:#fff;transform:scaleX(0.8700);">Landmaschinenwerkstatt</span>
<span class="t" style="left:2.92px;top:119.00px;font-size:12px;line-height:12px;color:#fff;transform:scaleX(0.8700);">Obst und Gemüse</span>
<span class="t" style="left:2.97px;top:132.00px;font-size:12px;line-height:12px;color:#fff;transform:scaleX(0.8700);">Schweinemastbetrieb</span>
<span class="t" style="left:2.97px;top:145.00px;font-size:12px;line-height:12px;color:#fff;transform:scaleX(0.8700);">Stiermastbetrieb</span>
</div>
<div class="a" style="left:272px;top:338px;width:17px;height:157px;background:#f0f0f0"></div>
<svg style="left:277px;top:345px" width="8" height="6"><path d="M0.7 5L4 1.5 7.3 5" fill="none" stroke="#505050" stroke-width="1.6"/></svg>
<svg style="left:277px;top:484px" width="8" height="6"><path d="M0.7 1L4 4.5 7.3 1" fill="none" stroke="#505050" stroke-width="1.6"/></svg>
<div class="a" style="left:273px;top:356px;width:15px;height:97px;background:#cdcdcd"></div>
<div class="gb" style="left:303px;top:327px;width:122px;height:200px"></div>
<div class="a" style="left:311px;top:326px;width:37px;height:3px;background:#f0f0f0"></div>
<span class="t" style="left:312.77px;top:322.00px;font-size:12px;line-height:12px;color:#000;transform:scaleX(0.9257);">Touren</span>
<div class="a" style="left:309px;top:337px;width:109px;height:159px;background:#fff;border:1px solid;border-color:#6a6a6a #fff #fff #6a6a6a"></div>
<div class="sel" style="left:310px;top:338px;width:107px;height:92px"></div>
<div class="a" style="left:310px;top:338px;width:107px;height:157px;overflow:hidden">
<span class="t" style="left:2.77px;top:15.00px;font-size:12px;line-height:12px;color:#fff;transform:scaleX(0.8700);">D, Ö</span>
<span class="t" style="left:2.76px;top:28.00px;font-size:12px;line-height:12px;color:#fff;transform:scaleX(0.8853);">Niederösterreich</span>
<span class="t" style="left:2.77px;top:41.00px;font-size:12px;line-height:12px;color:#fff;transform:scaleX(0.8700);">NÖ, OÖ</span>
<span class="t" style="left:2.75px;top:54.00px;font-size:12px;line-height:12px;color:#fff;transform:scaleX(0.8981);">NÖ, OÖ, B, W</span>
<span class="t" style="left:2.76px;top:67.00px;font-size:12px;line-height:12px;color:#fff;transform:scaleX(0.8816);">NÖ, OÖ, Stmk</span>
<span class="t" style="left:3.12px;top:80.00px;font-size:12px;line-height:12px;color:#fff;transform:scaleX(0.8700);">Österreich</span>
</div>
<div class="gb" style="left:431px;top:327px;width:122px;height:200px"></div>
<div class="a" style="left:438.4px;top:326px;width:43.60000000000002px;height:3px;background:#f0f0f0"></div>
<span class="t" style="left:440.36px;top:322.00px;font-size:12px;line-height:12px;color:#000;transform:scaleX(0.8646);">Vertreter</span>
<div class="a" style="left:437px;top:337px;width:109px;height:159px;background:#fff;border:1px solid;border-color:#6a6a6a #fff #fff #6a6a6a"></div>
<div class="sel" style="left:438px;top:338px;width:107px;height:118px"></div>
<div class="a" style="left:438px;top:338px;width:107px;height:157px;overflow:hidden">
<span class="t" style="left:2.77px;top:15.00px;font-size:12px;line-height:12px;color:#fff;transform:scaleX(0.8720);">Berger Gernot</span>
<span class="t" style="left:3.08px;top:28.00px;font-size:12px;line-height:12px;color:#fff;transform:scaleX(0.8700);">Geber Georg</span>
<span class="t" style="left:2.77px;top:41.00px;font-size:12px;line-height:12px;color:#fff;transform:scaleX(0.8700);">Holler Anton</span>
<span class="t" style="left:2.78px;top:54.00px;font-size:12px;line-height:12px;color:#fff;transform:scaleX(0.8658);">Meller Karl-Heinz</span>
<span class="t" style="left:2.77px;top:67.00px;font-size:12px;line-height:12px;color:#fff;transform:scaleX(0.8700);">Nadler Mario</span>
<span class="t" style="left:2.77px;top:80.00px;font-size:12px;line-height:12px;color:#fff;transform:scaleX(0.8700);">Rogner Alfred</span>
<span class="t" style="left:3.17px;top:93.00px;font-size:12px;line-height:12px;color:#fff;transform:scaleX(0.8700);">Schandl Jan</span>
<span class="t" style="left:3.30px;top:106.00px;font-size:12px;line-height:12px;color:#fff;transform:scaleX(0.8700);">Zuber Stefan</span>
</div>
<div class="gb" style="left:558px;top:327px;width:122px;height:200px"></div>
<div class="a" style="left:565.6px;top:326px;width:23.399999999999977px;height:3px;background:#f0f0f0"></div>
<span class="t" style="left:566.71px;top:322.00px;font-size:12px;line-height:12px;color:#000;transform:scaleX(0.9349);">PLZ</span>
<div class="a" style="left:564px;top:337px;width:109px;height:159px;background:#fff;border:1px solid;border-color:#6a6a6a #fff #fff #6a6a6a"></div>
<div class="sel" style="left:565px;top:338px;width:90px;height:156px"></div>
<div class="a" style="left:565px;top:338px;width:90px;height:157px;overflow:hidden">
<span class="t" style="left:2.77px;top:2.00px;font-size:12px;line-height:12px;color:#fff;transform:scaleX(0.9231);">1010</span>
<span class="t" style="left:3.07px;top:15.00px;font-size:12px;line-height:12px;color:#fff;transform:scaleX(0.8800);">2253</span>
<span class="t" style="left:3.07px;top:28.00px;font-size:12px;line-height:12px;color:#fff;transform:scaleX(0.8800);">2512</span>
<span class="t" style="left:3.07px;top:41.00px;font-size:12px;line-height:12px;color:#fff;transform:scaleX(0.8800);">2560</span>
<span class="t" style="left:3.20px;top:54.00px;font-size:12px;line-height:12px;color:#fff;transform:scaleX(0.8800);">3128</span>
<span class="t" style="left:3.20px;top:67.00px;font-size:12px;line-height:12px;color:#fff;transform:scaleX(0.8800);">3321</span>
<span class="t" style="left:3.20px;top:80.00px;font-size:12px;line-height:12px;color:#fff;transform:scaleX(0.8800);">3334</span>
<span class="t" style="left:3.20px;top:93.00px;font-size:12px;line-height:12px;color:#fff;transform:scaleX(0.8800);">3452</span>
<span class="t" style="left:3.20px;top:106.00px;font-size:12px;line-height:12px;color:#fff;transform:scaleX(0.8800);">3542</span>
<span class="t" style="left:3.20px;top:119.00px;font-size:12px;line-height:12px;color:#fff;transform:scaleX(0.8800);">3560</span>
<span class="t" style="left:3.20px;top:132.00px;font-size:12px;line-height:12px;color:#fff;transform:scaleX(0.8800);">3621</span>
<span class="t" style="left:3.20px;top:145.00px;font-size:12px;line-height:12px;color:#fff;transform:scaleX(0.8800);">3840</span>
</div>
<div class="a" style="left:655px;top:338px;width:17px;height:157px;background:#f0f0f0"></div>
<svg style="left:660px;top:345px" width="8" height="6"><path d="M0.7 5L4 1.5 7.3 5" fill="none" stroke="#505050" stroke-width="1.6"/></svg>
<svg style="left:660px;top:484px" width="8" height="6"><path d="M0.7 1L4 4.5 7.3 1" fill="none" stroke="#505050" stroke-width="1.6"/></svg>
<div class="a" style="left:656px;top:356px;width:15px;height:104px;background:#cdcdcd"></div>
<div class="btn" style="left:53px;top:496px;width:109px;height:22px"></div>
<span class="t" style="left:100.70px;top:501.00px;font-size:12px;line-height:12px;color:#000;transform:scaleX(0.7846);">Alle</span>
<div class="btn" style="left:181px;top:496px;width:109px;height:22px"></div>
<span class="t" style="left:228.70px;top:501.00px;font-size:12px;line-height:12px;color:#000;transform:scaleX(0.7846);">Alle</span>
<div class="btn" style="left:309px;top:496px;width:109px;height:22px"></div>
<span class="t" style="left:356.70px;top:501.00px;font-size:12px;line-height:12px;color:#000;transform:scaleX(0.7846);">Alle</span>
<div class="btn" style="left:437px;top:496px;width:109px;height:22px"></div>
<span class="t" style="left:484.70px;top:501.00px;font-size:12px;line-height:12px;color:#000;transform:scaleX(0.7846);">Alle</span>
<div class="btn" style="left:564px;top:496px;width:109px;height:22px"></div>
<span class="t" style="left:611.70px;top:501.00px;font-size:12px;line-height:12px;color:#000;transform:scaleX(0.7846);">Alle</span>
<div class="a" style="left:4px;top:506px;width:988px;height:512px;background:#f0f0f0;border:1px solid #707070;box-shadow:0 2px 17px rgba(0,0,0,.42),0 0 2px rgba(0,0,0,.2)"></div>
<div class="a" style="left:5px;top:507px;width:986px;height:30px;background:#fff"></div>
<span class="t" style="left:34.35px;top:516.00px;font-size:12px;line-height:12px;color:#000;transform:scaleX(0.9593);">Vorschau</span>
<svg style="left:872px;top:516px" width="102" height="11" shape-rendering="crispEdges"><path d="M0 5.5h10" stroke="#000" stroke-width="1"/><rect x="45.5" y="0.5" width="9" height="9" fill="none" stroke="#000"/></svg>
<svg style="left:963px;top:516px" width="10" height="10"><path d="M0 0l10 10M10 0L0 10" stroke="#000" stroke-width="1.1"/></svg>
<div class="a" style="left:5px;top:537px;width:986px;height:27px;background:#f0f0f0"></div>
<div class="a" style="left:5px;top:538px;width:556px;height:25px;background:#f7f7f7"></div>
<div class="a" style="left:5px;top:564px;width:986px;height:1px;background:#a0a0a0"></div>
<div class="a" style="left:5px;top:565px;width:986px;height:1px;background:#696969"></div>
<svg style="left:0;top:0" width="1000" height="570"><g transform="translate(14,512)"><path d="M4.5 5L5.5 1l2.5-.5L10.5 0v4.5l-3 .5z" fill="#f4f400"/><rect x="0.7" y="5.7" width="5.6" height="4.6" rx="1.2" fill="#f4f400" stroke="#000" stroke-width="1.4"/><path d="M3.5 7l-1 1 1 1" fill="none" stroke="#000" stroke-width="1"/><path d="M0.7 16.3v-4c0-1.6 6-1.6 6 0v4z" fill="#f4f400" stroke="#000" stroke-width="1.4"/><path d="M11 1v5M13.5 2.5v5M10 7.5l2 1M9 10.5h2M12.5 6.5l1.5 3" fill="none" stroke="#000" stroke-width="1.6"/><path d="M12 5v9l-1 3" fill="none" stroke="#102800" stroke-width="2.6"/><path d="M8.5 8v3M9.5 12.5l1 1.5" fill="none" stroke="#000" stroke-width="1.2"/></g><g transform="translate(25,545)"><rect x="0.5" y="0.5" width="2" height="11" fill="#fff" stroke="#ababab"/><path d="M4.5 6.5L10 0.3" fill="none" stroke="#ababab" stroke-width="1.1"/><path d="M9.5 0.5V11.5" fill="none" stroke="#ababab" stroke-width="1"/><path d="M9 3.5v5.5L6.2 6.6z" fill="#ababab"/></g><g transform="translate(47,545)"><path d="M4.5 6.5L10 0.3" fill="none" stroke="#ababab" stroke-width="1.1"/><path d="M9.5 0.5V11.5" fill="none" stroke="#ababab" stroke-width="1"/><path d="M9 3.5v5.5L6.2 6.6z" fill="#ababab"/></g><g transform="translate(182,545)"><path d="M0.5 0V11.5" fill="none" stroke="#ababab" stroke-width="1"/><path d="M1 3.6v5L5 6.1z" fill="#b8b8b8"/></g><g transform="translate(204,545)"><path d="M0.5 0V11.5" fill="none" stroke="#ababab" stroke-width="1"/><path d="M1 3.6v5L5 6.1z" fill="#b8b8b8"/><rect x="7.5" y="0.5" width="2.6" height="11" fill="#fff" stroke="#ababab"/></g><g transform="translate(310,543.5)"><circle cx="6.7" cy="4.2" r="3.9" fill="#dde6fa" stroke="#4866d4" stroke-width="1.4"/><path d="M10 7.4L12.6 9.9" fill="none" stroke="#80641c" stroke-width="3" stroke-linecap="round"/><path d="M10.2 7.4L12.4 9.6" fill="none" stroke="#dcb84c" stroke-width="1" stroke-linecap="round"/><path d="M0 10.5h5M2.5 8v5" fill="none" stroke="#3a58c8" stroke-width="1.2"/></g><g transform="translate(335,543.5)"><circle cx="6.7" cy="4.2" r="3.9" fill="#dde6fa" stroke="#4866d4" stroke-width="1.4"/><path d="M10 7.4L12.6 9.9" fill="none" stroke="#80641c" stroke-width="3" stroke-linecap="round"/><path d="M10.2 7.4L12.4 9.6" fill="none" stroke="#dcb84c" stroke-width="1" stroke-linecap="round"/><path d="M0 10.5h5" fill="none" stroke="#3a58c8" stroke-width="1.2"/></g><g transform="translate(400,556)"><path d="M0 4L4 0v4z" fill="#9a9a9a"/></g><g transform="translate(434.5,556)"><path d="M0 4L4 0v4z" fill="#9a9a9a"/></g><g transform="translate(459.5,556)"><path d="M0 4L4 0v4z" fill="#9a9a9a"/></g><g transform="translate(418,544)"><path d="M3 0.5h9l1.5 4.5h-11z" fill="#fff" stroke="#7088b8" stroke-width="0.9"/><path d="M4.5 2h6M4 3.5h7" fill="none" stroke="#a8b4cc" stroke-width="0.8"/><rect x="0.6" y="4.6" width="14" height="5" rx="1.2" fill="#b8c8e4" stroke="#4a62a0" stroke-width="1"/><rect x="0.6" y="8" width="14" height="5" rx="1.2" fill="#7c94c8" stroke="#3c5494" stroke-width="1"/><rect x="2" y="9" width="7" height="2.6" fill="#eef2fa"/><rect x="10" y="9" width="3" height="3" fill="#10b040"/><rect x="11" y="10" width="1" height="1" fill="#c0ffd0"/><path d="M1 13.3h13.5" fill="none" stroke="#38508c" stroke-width="1.2"/></g><g transform="translate(443,544)"><path d="M3 0.5h9l1.5 4.5h-11z" fill="#fff" stroke="#7088b8" stroke-width="0.9"/><path d="M4.5 2h6M4 3.5h7" fill="none" stroke="#a8b4cc" stroke-width="0.8"/><rect x="0.6" y="4.6" width="14" height="5" rx="1.2" fill="#b8c8e4" stroke="#4a62a0" stroke-width="1"/><rect x="0.6" y="8" width="14" height="5" rx="1.2" fill="#7c94c8" stroke="#3c5494" stroke-width="1"/><rect x="2" y="9" width="7" height="2.6" fill="#eef2fa"/><rect x="10" y="9" width="3" height="3" fill="#10b040"/><rect x="11" y="10" width="1" height="1" fill="#c0ffd0"/><path d="M1 13.3h13.5" fill="none" stroke="#38508c" stroke-width="1.2"/></g><g transform="translate(478,544)"><rect x="0.6" y="0.6" width="12" height="12" rx="1.6" fill="#5a80e8" stroke="#3858c8" stroke-width="1.2"/><rect x="3" y="1" width="7.4" height="5.6" fill="#fff"/><path d="M4.5 2.5h4.5M4.5 4.5h4.5" fill="none" stroke="#98a8d8" stroke-width="1"/><rect x="4" y="8.6" width="5.6" height="4" fill="#dce4fa"/><rect x="5" y="9.6" width="1.8" height="3" fill="#5a80e8"/></g><g transform="translate(503,545.5)"><rect x="0.6" y="0.6" width="13" height="9" rx="1.6" fill="#fff" stroke="#5a4848" stroke-width="1.2"/><path d="M8 2.6h3.5M4 4.4h7M4 6h5M4 7.6h6" fill="none" stroke="#7a6c6c" stroke-width="1"/></g><g transform="translate(540,544)"><path d="M1 0.6h6.6v10.4H1z" fill="#f4f8ff" stroke="#3858b0" stroke-width="1"/><path d="M0.6 0.6l4.6 1.6v10.6l-4.6-1.8z" fill="#6c98e8" stroke="#2c4cac" stroke-width="1"/><rect x="3.4" y="6" width="1" height="1.4" fill="#1c3c9c"/></g></svg>
<div class="sunk" style="left:68px;top:541px;width:102px;height:21px;background:#f0f0f0"></div>
<div class="btn" style="left:151px;top:543px;width:17px;height:17px"></div>
<svg style="left:156px;top:550px" width="7" height="4" shape-rendering="crispEdges"><path d="M0 0h7v1h-1v1h-1v1h-1v1h-1v-1h-1v-1h-1v-1h-1z" fill="#808080"/></svg>
<span class="t" style="left:74.15px;top:545.00px;font-size:12px;line-height:12px;color:#838383;transform:scaleX(0.9499);">1 von 1</span>
<div class="sunk" style="left:231px;top:541px;width:72px;height:21px;background:#fff"></div>
<div class="btn" style="left:284px;top:543px;width:17px;height:17px"></div>
<svg style="left:289px;top:550px" width="7" height="4" shape-rendering="crispEdges"><path d="M0 0h7v1h-1v1h-1v1h-1v1h-1v-1h-1v-1h-1v-1h-1z" fill="#000"/></svg>
<span class="t" style="left:236.45px;top:545.00px;font-size:12px;line-height:12px;color:#000;transform:scaleX(0.9241);">200%</span>
<div class="sep" style="left:226px;top:541px;height:21px"></div>
<div class="sep" style="left:409px;top:541px;height:21px"></div>
<div class="sep" style="left:468px;top:541px;height:21px"></div>
<div class="sep" style="left:527px;top:541px;height:21px"></div>
<div class="a" style="left:10px;top:543px;width:1px;height:17px;background:repeating-linear-gradient(to bottom,#a0a0a0 0,#a0a0a0 1px,transparent 1px,transparent 4px)"></div>
<span class="t" style="left:359.38px;top:545.00px;font-size:12px;line-height:12px;color:#3c60c8;font-weight:bold;transform:scaleX(0.8246);">1:1</span>
<div class="a" style="left:5px;top:566px;width:986px;height:450px;background:#f0f0f0"></div>
<div class="a" style="left:5px;top:566px;width:1px;height:451px;background:#a0a0a0"></div>
<div class="a" style="left:6px;top:566px;width:1px;height:451px;background:#8c8c8c"></div>
<div class="a" style="left:7px;top:1015px;width:984px;height:2px;background:#fff"></div>
<div class="a" style="left:7px;top:566px;width:235px;height:450px;background:#f0f0f0"></div>
<svg style="left:48px;top:576px" width="152" height="215" shape-rendering="crispEdges"><defs><pattern id="ht" width="8" height="8" patternUnits="userSpaceOnUse"><rect x="0" y="0" width="1" height="1" fill="#707070"/><rect x="7" y="1" width="1" height="1" fill="#707070"/><rect x="6" y="2" width="1" height="1" fill="#707070"/><rect x="5" y="3" width="1" height="1" fill="#707070"/><rect x="4" y="4" width="1" height="1" fill="#707070"/><rect x="3" y="5" width="1" height="1" fill="#707070"/><rect x="2" y="6" width="1" height="1" fill="#707070"/><rect x="1" y="7" width="1" height="1" fill="#707070"/></pattern></defs><rect x="0" y="0" width="152" height="215" fill="#fff"/><rect x="0" y="0" width="152" height="215" fill="url(#ht)"/><rect x="0.5" y="0.5" width="151" height="214" fill="none" stroke="#000" stroke-width="1"/><rect x="4.5" y="4.5" width="143" height="207" fill="#fff" stroke="#555" stroke-width="1"/></svg><div class="a" style="left:59.0px;top:583.7px;transform:scale(0.225,0.2456);transform-origin:0 0;font-size:10.4px;line-height:12.25px;white-space:pre;color:#000;letter-spacing:0.15px;text-rendering:geometricPrecision;font-weight:bold;-webkit-text-stroke:0.45px #000">Firma<br>Agrar GmbH Süd<br>Landstraße 12a<br>2560 Berndorf<br>Schandl Jan</div><div class="a" style="left:106.2px;top:583.7px;transform:scale(0.225,0.2456);transform-origin:0 0;font-size:10.4px;line-height:12.25px;white-space:pre;color:#000;letter-spacing:0.15px;text-rendering:geometricPrecision;font-weight:bold;-webkit-text-stroke:0.45px #000">Firma<br>Landmaschinen Huber<br>Werkstatt und Handel<br>Industriestraße 14<br>3542 Gföhl<br>Geber Georg</div><div class="a" style="left:153.1px;top:583.7px;transform:scale(0.225,0.2456);transform-origin:0 0;font-size:10.4px;line-height:12.25px;white-space:pre;color:#000;letter-spacing:0.15px;text-rendering:geometricPrecision;font-weight:bold;-webkit-text-stroke:0.45px #000">Herr<br>Mayer Johann<br>Dorfstraße 7<br>3840 Waidhof</div><div class="a" style="left:59.0px;top:608.8px;transform:scale(0.225,0.2456);transform-origin:0 0;font-size:10.4px;line-height:12.25px;white-space:pre;color:#000;letter-spacing:0.15px;text-rendering:geometricPrecision;font-weight:bold;-webkit-text-stroke:0.45px #000">Herr<br>Huber Franz Ing<br>Hauptplatz 3<br>3621 Mitterarn</div><div class="a" style="left:106.2px;top:608.8px;transform:scale(0.225,0.2456);transform-origin:0 0;font-size:10.4px;line-height:12.25px;white-space:pre;color:#000;letter-spacing:0.15px;text-rendering:geometricPrecision;font-weight:bold;-webkit-text-stroke:0.45px #000">Herr<br>Direktvermarktung Gruber<br>Am Anger 11<br>3542 Gföhl a</div><div class="a" style="left:153.1px;top:608.8px;transform:scale(0.225,0.2456);transform-origin:0 0;font-size:10.4px;line-height:12.25px;white-space:pre;color:#000;letter-spacing:0.15px;text-rendering:geometricPrecision;font-weight:bold;-webkit-text-stroke:0.45px #000">Firma<br>Schweinemast Rogner GmbH<br>Au 2<br>3334 Gaflenz<br>Rogner Alfred</div><div class="a" style="left:59.0px;top:633.9px;transform:scale(0.225,0.2456);transform-origin:0 0;font-size:10.4px;line-height:12.25px;white-space:pre;color:#000;letter-spacing:0.15px;text-rendering:geometricPrecision;font-weight:bold;-webkit-text-stroke:0.45px #000">Herr<br>Brantweiner Leopold<br>Hammergasse 32<br>2253 Hammerlindl</div><div class="a" style="left:106.2px;top:633.9px;transform:scale(0.225,0.2456);transform-origin:0 0;font-size:10.4px;line-height:12.25px;white-space:pre;color:#000;letter-spacing:0.15px;text-rendering:geometricPrecision;font-weight:bold;-webkit-text-stroke:0.45px #000">Herr<br>Fellner Sebastian DI<br>Hochkoglberg 50<br>3560 Ferlach</div><div class="a" style="left:153.1px;top:633.9px;transform:scale(0.225,0.2456);transform-origin:0 0;font-size:10.4px;line-height:12.25px;white-space:pre;color:#000;letter-spacing:0.15px;text-rendering:geometricPrecision;font-weight:bold;-webkit-text-stroke:0.45px #000">Herr<br>Sauser Siegfried<br>Raiffeisenstraße 23<br>3452 Hollersdorf</div><div class="a" style="left:59.0px;top:658.4px;transform:scale(0.225,0.2456);transform-origin:0 0;font-size:10.4px;line-height:12.25px;white-space:pre;color:#000;letter-spacing:0.15px;text-rendering:geometricPrecision;font-weight:bold;-webkit-text-stroke:0.45px #000">Frau<br>Sommer Julia Julia DKS<br>Zentralpark 5<br>2512 Zaussing</div><div class="a" style="left:106.2px;top:658.4px;transform:scale(0.225,0.2456);transform-origin:0 0;font-size:10.4px;line-height:12.25px;white-space:pre;color:#000;letter-spacing:0.15px;text-rendering:geometricPrecision;font-weight:bold;-webkit-text-stroke:0.45px #000">Firma<br>Raiffeisenlagerhaus<br>Bahnhofstraße 4<br>3128 Bahnbergen<br>Holler Anton</div><div class="a" style="left:153.1px;top:658.4px;transform:scale(0.225,0.2456);transform-origin:0 0;font-size:10.4px;line-height:12.25px;white-space:pre;color:#000;letter-spacing:0.15px;text-rendering:geometricPrecision;font-weight:bold;-webkit-text-stroke:0.45px #000">Firma<br>Viehbörse<br>Bruckerstraße 23<br>3321 St. Brucken<br>Zuber Stefan</div><div class="a" style="left:59.0px;top:682.9px;transform:scale(0.225,0.2456);transform-origin:0 0;font-size:10.4px;line-height:12.25px;white-space:pre;color:#000;letter-spacing:0.15px;text-rendering:geometricPrecision;font-weight:bold;-webkit-text-stroke:0.45px #000">Firma<br>Genol AG<br>Breitenfurterstraße<br>1010 Wien<br>Meller Karl-Heinz</div><div class="a" style="left:106.2px;top:682.9px;transform:scale(0.225,0.2456);transform-origin:0 0;font-size:10.4px;line-height:12.25px;white-space:pre;color:#000;letter-spacing:0.15px;text-rendering:geometricPrecision;font-weight:bold;-webkit-text-stroke:0.45px #000">Firma<br>Diskont Bürobedarf<br>Thalheimerstraße 12<br>4545 Leonfelden<br>Berger Gernot</div><div class="a" style="left:153.1px;top:682.9px;transform:scale(0.225,0.2456);transform-origin:0 0;font-size:10.4px;line-height:12.25px;white-space:pre;color:#000;letter-spacing:0.15px;text-rendering:geometricPrecision;font-weight:bold;-webkit-text-stroke:0.45px #000">Firma<br>Nadler Obst-Gemüse KG<br>Freilandstraße 3<br>3334 Braxen<br>Nadler Mario</div>
<div class="a" style="left:242px;top:566px;width:1px;height:450px;background:#fbfbfb"></div>
<div class="a" style="left:243px;top:566px;width:5px;height:450px;background:#f0f0f0"></div>
<div class="a" style="left:248px;top:566px;width:1px;height:450px;background:#6a6a6a"></div>
<div class="a" style="left:249px;top:566px;width:1px;height:450px;background:#000"></div>
<div class="a" style="left:250px;top:566px;width:608px;height:450px;background:#fff"></div>
<svg style="left:250px;top:566px;overflow:hidden" width="16" height="450" shape-rendering="crispEdges"><defs><pattern id="h250" width="8" height="8" patternUnits="userSpaceOnUse" patternTransform="translate(8,0)"><rect x="7" y="0" width="1" height="1" fill="#2e2e2e"/><rect x="6" y="1" width="1" height="1" fill="#2e2e2e"/><rect x="5" y="2" width="1" height="1" fill="#2e2e2e"/><rect x="4" y="3" width="1" height="1" fill="#2e2e2e"/><rect x="3" y="4" width="1" height="1" fill="#2e2e2e"/><rect x="2" y="5" width="1" height="1" fill="#2e2e2e"/><rect x="1" y="6" width="1" height="1" fill="#2e2e2e"/><rect x="0" y="7" width="1" height="1" fill="#2e2e2e"/></pattern></defs><rect width="16" height="450" fill="url(#h250)"/></svg>
<svg style="left:842px;top:566px;overflow:hidden" width="16" height="450" shape-rendering="crispEdges"><defs><pattern id="h842" width="8" height="8" patternUnits="userSpaceOnUse" patternTransform="translate(8,0)"><rect x="7" y="0" width="1" height="1" fill="#2e2e2e"/><rect x="6" y="1" width="1" height="1" fill="#2e2e2e"/><rect x="5" y="2" width="1" height="1" fill="#2e2e2e"/><rect x="4" y="3" width="1" height="1" fill="#2e2e2e"/><rect x="3" y="4" width="1" height="1" fill="#2e2e2e"/><rect x="2" y="5" width="1" height="1" fill="#2e2e2e"/><rect x="1" y="6" width="1" height="1" fill="#2e2e2e"/><rect x="0" y="7" width="1" height="1" fill="#2e2e2e"/></pattern></defs><rect width="16" height="450" fill="url(#h842)"/></svg>
<div class="a" style="left:266px;top:566px;width:1px;height:450px;background:#7a7a7a"></div>
<div class="a" style="left:841px;top:566px;width:1px;height:450px;background:#6a6a6a"></div>
<div class="a" style="left:858px;top:566px;width:2px;height:450px;background:#000"></div>
<div class="a" style="left:860px;top:566px;width:113px;height:450px;background:#f0f0f0"></div>
<div class="a" style="left:973px;top:566px;width:1px;height:450px;background:#fff"></div>
<div class="a" style="left:974px;top:566px;width:16px;height:450px;background:#f0f0f0"></div>
<div class="a" style="left:974px;top:686px;width:15px;height:209px;background:#cdcdcd"></div>
<svg style="left:978px;top:572px" width="8" height="6"><path d="M0.7 5.1L4 1.8 7.3 5.1" fill="none" stroke="#505050" stroke-width="1.7"/></svg>
<svg style="left:978px;top:1005px" width="8" height="6"><path d="M0.7 0.9L4 4.2 7.3 0.9" fill="none" stroke="#505050" stroke-width="1.7"/></svg>
<div class="a" style="left:990px;top:566px;width:1px;height:450px;background:#fff"></div>
<span class="t" style="left:295.20px;top:587.00px;font-size:10.2px;line-height:10.2px;color:#161616;letter-spacing:0.033px;text-rendering:geometricPrecision;">Herr</span>
<span class="t" style="left:295.20px;top:599.00px;font-size:10.2px;line-height:10.2px;color:#161616;letter-spacing:0.014px;text-rendering:geometricPrecision;">Brantweiner Leopold</span>
<span class="t" style="left:295.20px;top:611.00px;font-size:10.2px;line-height:10.2px;color:#161616;letter-spacing:0.120px;text-rendering:geometricPrecision;">Hammergasse 32</span>
<span class="t" style="left:295.50px;top:624.00px;font-size:10.2px;line-height:10.2px;color:#161616;letter-spacing:0.120px;text-rendering:geometricPrecision;">2253 Hammerlindl</span>
<span class="t" style="left:484.00px;top:587.00px;font-size:10.2px;line-height:10.2px;color:#161616;letter-spacing:0.120px;text-rendering:geometricPrecision;">Herr</span>
<span class="t" style="left:484.00px;top:599.00px;font-size:10.2px;line-height:10.2px;color:#161616;letter-spacing:0.005px;text-rendering:geometricPrecision;">Fellner Sebastian DI</span>
<span class="t" style="left:484.00px;top:611.00px;font-size:10.2px;line-height:10.2px;color:#161616;letter-spacing:0.120px;text-rendering:geometricPrecision;">Hochkoglberg 50</span>
<span class="t" style="left:484.45px;top:624.00px;font-size:10.2px;line-height:10.2px;color:#161616;letter-spacing:0.120px;text-rendering:geometricPrecision;">3560 Ferlach</span>
<span class="t" style="left:672.00px;top:587.00px;font-size:10.2px;line-height:10.2px;color:#161616;letter-spacing:0.120px;text-rendering:geometricPrecision;">Herr</span>
<span class="t" style="left:672.35px;top:599.00px;font-size:10.2px;line-height:10.2px;color:#161616;letter-spacing:0.120px;text-rendering:geometricPrecision;">Sauser Siegfried</span>
<span class="t" style="left:672.00px;top:611.00px;font-size:10.2px;line-height:10.2px;color:#161616;letter-spacing:0.120px;text-rendering:geometricPrecision;">Raiffeisenstraße 23</span>
<span class="t" style="left:672.45px;top:624.00px;font-size:10.2px;line-height:10.2px;color:#161616;letter-spacing:0.120px;text-rendering:geometricPrecision;">3452 Hollersdorf</span>
<span class="t" style="left:295.20px;top:688.00px;font-size:10.2px;line-height:10.2px;color:#161616;letter-spacing:0.120px;text-rendering:geometricPrecision;">Frau</span>
<span class="t" style="left:295.55px;top:700.00px;font-size:10.2px;line-height:10.2px;color:#161616;letter-spacing:0.120px;text-rendering:geometricPrecision;">Sommer Julia Julia DKS</span>
<span class="t" style="left:295.70px;top:713.00px;font-size:10.2px;line-height:10.2px;color:#161616;letter-spacing:0.120px;text-rendering:geometricPrecision;">Zentralpark 5</span>
<span class="t" style="left:295.50px;top:725.00px;font-size:10.2px;line-height:10.2px;color:#161616;letter-spacing:0.120px;text-rendering:geometricPrecision;">2512 Zaussing</span>
<span class="t" style="left:484.00px;top:688.00px;font-size:10.2px;line-height:10.2px;color:#161616;letter-spacing:0.120px;text-rendering:geometricPrecision;">Firma</span>
<span class="t" style="left:484.00px;top:700.00px;font-size:10.2px;line-height:10.2px;color:#161616;letter-spacing:0.120px;text-rendering:geometricPrecision;">Raiffeisenlagerhaus</span>
<span class="t" style="left:484.00px;top:713.00px;font-size:10.2px;line-height:10.2px;color:#161616;letter-spacing:0.120px;text-rendering:geometricPrecision;">Bahnhofstraße 4</span>
<span class="t" style="left:484.45px;top:725.00px;font-size:10.2px;line-height:10.2px;color:#161616;letter-spacing:0.120px;text-rendering:geometricPrecision;">3128 Bahnbergen</span>
<span class="t" style="left:484.00px;top:737.00px;font-size:10.2px;line-height:10.2px;color:#161616;letter-spacing:0.120px;text-rendering:geometricPrecision;">Holler Anton</span>
<span class="t" style="left:672.00px;top:688.00px;font-size:10.2px;line-height:10.2px;color:#161616;letter-spacing:0.120px;text-rendering:geometricPrecision;">Firma</span>
<span class="t" style="left:672.80px;top:700.00px;font-size:10.2px;line-height:10.2px;color:#161616;letter-spacing:0.120px;text-rendering:geometricPrecision;">Viehbörse</span>
<span class="t" style="left:672.00px;top:713.00px;font-size:10.2px;line-height:10.2px;color:#161616;letter-spacing:0.120px;text-rendering:geometricPrecision;">Bruckerstraße 23</span>
<span class="t" style="left:672.45px;top:725.00px;font-size:10.2px;line-height:10.2px;color:#161616;letter-spacing:0.120px;text-rendering:geometricPrecision;">3321 St. Brucken</span>
<span class="t" style="left:672.50px;top:737.00px;font-size:10.2px;line-height:10.2px;color:#161616;letter-spacing:0.120px;text-rendering:geometricPrecision;">Zuber Stefan</span>
<span class="t" style="left:295.20px;top:790.00px;font-size:10.2px;line-height:10.2px;color:#161616;letter-spacing:0.120px;text-rendering:geometricPrecision;">Firma</span>
<span class="t" style="left:295.50px;top:802.00px;font-size:10.2px;line-height:10.2px;color:#161616;letter-spacing:0.120px;text-rendering:geometricPrecision;">Genol AG</span>
<span class="t" style="left:295.20px;top:814.00px;font-size:10.2px;line-height:10.2px;color:#161616;letter-spacing:0.120px;text-rendering:geometricPrecision;">Breitenfurterstraße</span>
<span class="t" style="left:295.25px;top:826.00px;font-size:10.2px;line-height:10.2px;color:#161616;letter-spacing:0.120px;text-rendering:geometricPrecision;">1010 Wien</span>
<span class="t" style="left:295.20px;top:838.00px;font-size:10.2px;line-height:10.2px;color:#161616;letter-spacing:0.120px;text-rendering:geometricPrecision;">Meller Karl-Heinz</span>
<span class="t" style="left:484.00px;top:790.00px;font-size:10.2px;line-height:10.2px;color:#161616;letter-spacing:0.120px;text-rendering:geometricPrecision;">Firma</span>
<span class="t" style="left:484.00px;top:802.00px;font-size:10.2px;line-height:10.2px;color:#161616;letter-spacing:0.120px;text-rendering:geometricPrecision;">Diskont Bürobedarf</span>
<span class="t" style="left:484.60px;top:814.00px;font-size:10.2px;line-height:10.2px;color:#161616;letter-spacing:0.120px;text-rendering:geometricPrecision;">Thalheimerstraße 12</span>
<span class="t" style="left:484.60px;top:826.00px;font-size:10.2px;line-height:10.2px;color:#161616;letter-spacing:0.120px;text-rendering:geometricPrecision;">4545 Leonfelden</span>
<span class="t" style="left:484.00px;top:838.00px;font-size:10.2px;line-height:10.2px;color:#161616;letter-spacing:0.120px;text-rendering:geometricPrecision;">Berger Gernot</span>
<span class="t" style="left:672.00px;top:790.00px;font-size:10.2px;line-height:10.2px;color:#161616;letter-spacing:0.120px;text-rendering:geometricPrecision;">Firma</span>
<span class="t" style="left:672.00px;top:802.00px;font-size:10.2px;line-height:10.2px;color:#161616;letter-spacing:0.120px;text-rendering:geometricPrecision;">Nadler Obst-Gemüse KG</span>
<span class="t" style="left:672.00px;top:814.00px;font-size:10.2px;line-height:10.2px;color:#161616;letter-spacing:0.120px;text-rendering:geometricPrecision;">Freilandstraße 3</span>
<span class="t" style="left:672.45px;top:826.00px;font-size:10.2px;line-height:10.2px;color:#161616;letter-spacing:0.120px;text-rendering:geometricPrecision;">3334 Braxen</span>
<span class="t" style="left:672.00px;top:838.00px;font-size:10.2px;line-height:10.2px;color:#161616;letter-spacing:0.120px;text-rendering:geometricPrecision;">Nadler Mario</span>
</body></html>
